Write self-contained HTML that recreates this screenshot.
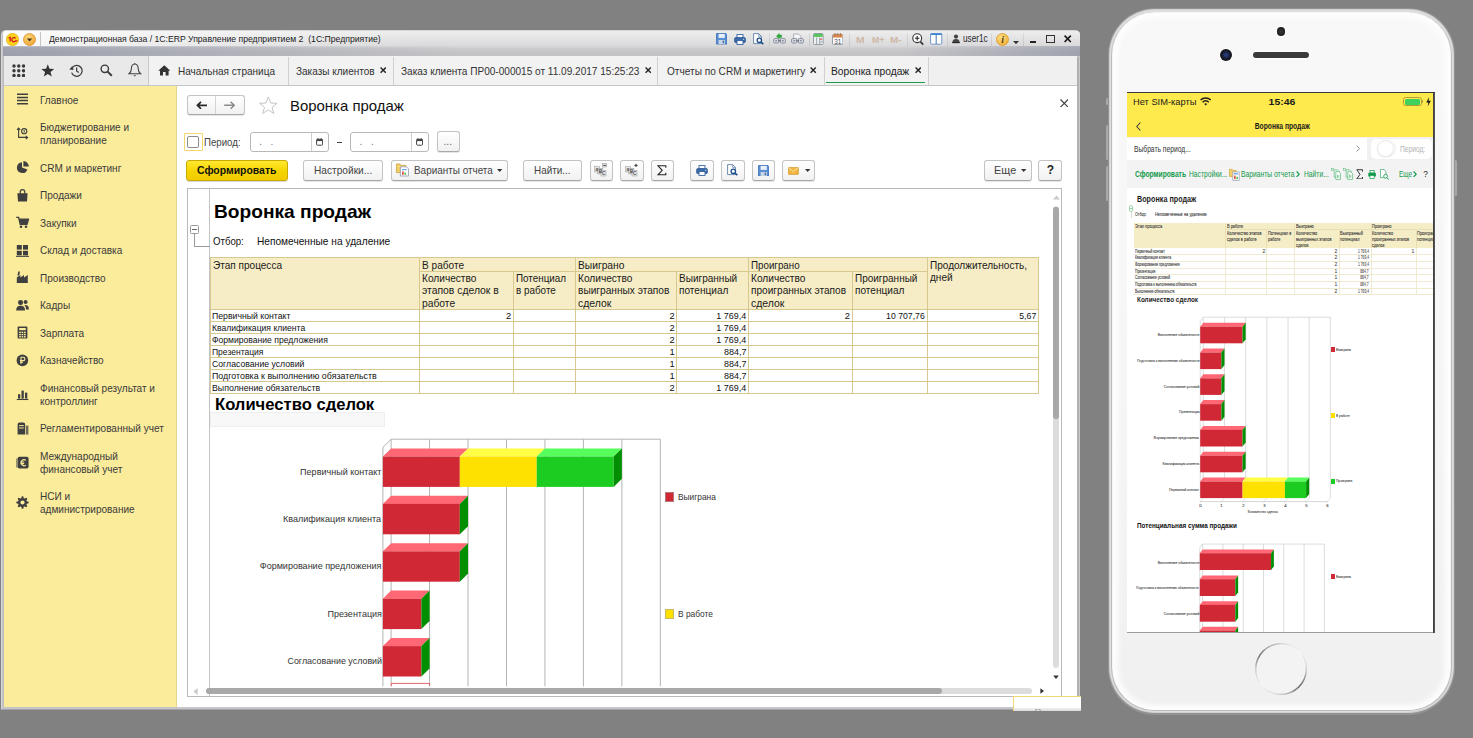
<!DOCTYPE html>
<html><head><meta charset="utf-8"><title>Воронка продаж</title>
<style>
html,body{margin:0;padding:0;}
body{width:1473px;height:738px;overflow:hidden;background:#818181;font-family:"Liberation Sans",sans-serif;position:relative;}
div,span,svg{position:absolute;box-sizing:border-box;}
span{white-space:pre;}
</style></head><body>
<div style="left:1.00px;top:29.50px;width:1079.20px;height:680.80px;background:linear-gradient(90deg,#c9c9cc 0,#b2b2b6 3px,#b0b0b3 100%);border-radius:5px 5px 1px 1px;border:1px solid #d6d6d8;border-right:1.3px solid #c9c9cb;border-bottom-color:#a2a2a7;"></div>
<div style="left:2.00px;top:30.50px;width:1078.00px;height:679.00px;border-top:1px solid #f4f4f6;border-radius:4px 4px 0 0;"></div>
<div style="left:2.00px;top:706.90px;width:1078.00px;height:2.20px;background:#c6c6ca;"></div>
<div style="left:2.50px;top:30.50px;width:1077.00px;height:26.00px;border-radius:4px 4px 0 0;background:linear-gradient(#ededee 0%,#e3e3e4 30%,#d9d9db 58%,#cbcbcd 68%,#c4c4c7 82%,#c3c3c6 100%);"></div>
<div style="left:2.50px;top:30.50px;width:420.00px;height:16.50px;border-radius:4px 0 0 0;background:linear-gradient(90deg,rgba(255,255,255,.9) 0,rgba(255,255,255,.55) 25%,rgba(255,255,255,0) 100%);"></div>
<div style="left:2.50px;top:46.00px;width:460.00px;height:10.30px;background:linear-gradient(90deg,rgba(125,130,150,.55) 0,rgba(125,130,150,.38) 30%,rgba(125,130,150,0) 100%);"></div>
<div style="left:899.50px;top:46.00px;width:180.00px;height:10.30px;background:linear-gradient(270deg,rgba(125,130,150,.5) 0,rgba(125,130,150,0) 100%);"></div>
<div style="left:4.00px;top:56.30px;width:1073.00px;height:29.30px;background:#f2f2f2;border-bottom:1px solid #c6c6c6;"></div>
<div style="left:4.00px;top:56.30px;width:144.50px;height:28.40px;background:#e9e9e9;border-right:1px solid #c9c9c9;"></div>
<div style="left:4.00px;top:85.60px;width:173.30px;height:621.40px;background:#fbec9c;border-right:1px solid #e3d58a;"></div>
<div style="left:177.30px;top:85.60px;width:899.70px;height:621.40px;background:#fff;"></div>
<svg style="left:5.50px;top:33.00px;" width="13" height="13" viewBox="0 0 13 13"><circle cx="6.5" cy="6.5" r="6.2" fill="#fbd11c" stroke="#e5a90f" stroke-width=".6"/><path d="M2.6 5.3 L4.2 4.3 V8.6 M9.6 5.4 A2.1 2.1 0 1 0 9.6 7.9 H11.4" fill="none" stroke="#d4141c" stroke-width="1.25"/></svg>
<svg style="left:23.00px;top:33.00px;" width="13" height="13" viewBox="0 0 13 13"><defs><radialGradient id="og" cx=".4" cy=".3" r=".8"><stop offset="0" stop-color="#fbd77a"/><stop offset="1" stop-color="#eea02a"/></radialGradient></defs><circle cx="6.5" cy="6.5" r="6" fill="url(#og)" stroke="#d48a1c" stroke-width=".7"/><path d="M3.8 5.6 H9.2 L6.5 8.6 Z" fill="#4a3a22"/></svg>
<div style="left:40.30px;top:32.00px;width:1.00px;height:15.00px;background:#c4c4c8;"></div>
<span style="left:48.80px;top:32.20px;font-size:9.60px;line-height:14px;color:#1b1b1b;transform:scaleX(0.9011);transform-origin:0 50%;">Демонстрационная база / 1C:ERP Управление предприятием 2  (1С:Предприятие)</span>
<svg style="left:715.80px;top:33.40px;" width="11.5" height="11.5" viewBox="0 0 11.5 11.5"><path d="M.5 .5 H10 L11 1.5 V11 H.5 Z" fill="#5b8fd3" stroke="#3a6bb0" stroke-width=".8"/><rect x="2.6" y=".9" width="6.2" height="4" fill="#e8f0fa"/><rect x="2.6" y="7" width="6.2" height="4" fill="#c9d6e6"/><rect x="6.6" y="7.7" width="1.4" height="2.6" fill="#4d6f98"/></svg>
<svg style="left:733.70px;top:33.80px;" width="12.0" height="11.0" viewBox="0 0 12 11"><rect x="3" y=".6" width="6" height="3.6" fill="#fff" stroke="#2f5f9c" stroke-width=".9"/><rect x=".6" y="3.6" width="10.8" height="5" rx="1.2" fill="#3a6cab" stroke="#234f88" stroke-width=".7"/><rect x="3" y="6.6" width="6" height="3.8" fill="#fff" stroke="#2f5f9c" stroke-width=".9"/><rect x="9" y="4.8" width="1.2" height="1" fill="#cfe0f5"/></svg>
<svg style="left:753.20px;top:33.20px;" width="11.0" height="12.0" viewBox="0 0 11 12"><path d="M.6 .6 H5.6 L8.4 3.4 V10.6 H.6 Z" fill="#fff" stroke="#5f7fa8" stroke-width=".9"/><path d="M5.6 .6 V3.4 H8.4" fill="none" stroke="#5f7fa8" stroke-width=".7"/><circle cx="6.3" cy="7.3" r="2.2" fill="#fff" stroke="#1d4f8a" stroke-width="1.3"/><path d="M7.9 8.9 L10.3 11.3" stroke="#1d4f8a" stroke-width="1.6"/></svg>
<div style="left:769.00px;top:32.50px;width:1.00px;height:13.50px;background:linear-gradient(#d9d9dc,#c4c5ca);"></div>
<svg style="left:773.00px;top:33.40px;" width="13" height="11.5" viewBox="0 0 13 11.5"><path d="M3.4 3.2 L6.2 .4 V2 H8.6 V4.4 H6.2 V6 Z" fill="#2fae3c" stroke="#1d8a2b" stroke-width=".4"/><rect x=".6" y="5.6" width="5.2" height="4.4" rx="1.2" fill="#dfe2e8" stroke="#7c8492" stroke-width=".9"/><rect x="7.2" y="5.6" width="5.2" height="4.4" rx="1.2" fill="#dfe2e8" stroke="#7c8492" stroke-width=".9"/><path d="M2.2 7.8 H4.2 M8.8 7.8 H10.8 M5 7.8 H8" stroke="#5b6370" stroke-width=".9"/></svg>
<svg style="left:791.20px;top:33.40px;" width="13" height="11.5" viewBox="0 0 13 11.5"><path d="M2.6 5 V1 H7.6 L10 3.4 V5" fill="#f4f4f6" stroke="#9aa0aa" stroke-width=".8"/><rect x=".6" y="5.6" width="5.2" height="4.4" rx="1.2" fill="#dfe2e8" stroke="#7c8492" stroke-width=".9"/><rect x="7.2" y="5.6" width="5.2" height="4.4" rx="1.2" fill="#dfe2e8" stroke="#7c8492" stroke-width=".9"/><path d="M2.2 7.8 H4.2 M8.8 7.8 H10.8 M5 7.8 H8" stroke="#5b6370" stroke-width=".9"/></svg>
<div style="left:809.00px;top:32.50px;width:1.00px;height:13.50px;background:linear-gradient(#d9d9dc,#c4c5ca);"></div>
<svg style="left:813.20px;top:33.20px;" width="10.6" height="12" viewBox="0 0 10.6 12"><rect x=".5" y=".5" width="9.6" height="11" rx="1" fill="#eef0f2" stroke="#8d949e" stroke-width=".9"/><rect x=".9" y=".9" width="8.8" height="3" fill="#57c45b"/><path d="M3.6 4.4 V11 M6.6 4.4 V11" stroke="#8d949e" stroke-width=".8"/><rect x="7.2" y="5.4" width="1.6" height="1.6" fill="#e45a5a"/><rect x="7.2" y="8" width="1.6" height="1.6" fill="#aab0b8"/></svg>
<svg style="left:832.00px;top:33.00px;" width="11.4" height="12.2" viewBox="0 0 11.4 12.2"><rect x=".5" y="1.4" width="10.4" height="10.2" rx="1" fill="#fff" stroke="#8d949e" stroke-width=".9"/><rect x=".9" y="1.6" width="9.6" height="3" fill="#d98a50"/><path d="M3 0 V3 M5.7 0 V3 M8.4 0 V3" stroke="#b46a34" stroke-width=".9"/><text x="5.7" y="10.6" font-size="6.4" font-family="Liberation Sans" text-anchor="middle" fill="#445">31</text></svg>
<div style="left:849.40px;top:32.50px;width:1.00px;height:13.50px;background:linear-gradient(#d9d9dc,#c4c5ca);"></div>
<span style="left:855.80px;top:32.60px;font-size:9.60px;line-height:14px;color:#cdb8a6;font-weight:bold;transform:scaleX(1.0750);transform-origin:0 50%;">M</span>
<span style="left:872.00px;top:32.60px;font-size:9.60px;line-height:14px;color:#cdb8a6;font-weight:bold;transform:scaleX(0.9111);transform-origin:0 50%;">M+</span>
<span style="left:890.00px;top:32.60px;font-size:9.60px;line-height:14px;color:#cdb8a6;font-weight:bold;transform:scaleX(1.0369);transform-origin:0 50%;">M-</span>
<div style="left:907.30px;top:32.50px;width:1.00px;height:13.50px;background:linear-gradient(#d9d9dc,#c4c5ca);"></div>
<svg style="left:912.20px;top:33.20px;" width="12" height="12.4" viewBox="0 0 12 12.4"><circle cx="5.2" cy="5.2" r="4.4" fill="#fff" stroke="#333" stroke-width="1.1"/><path d="M3 5.2 H7.4 M5.2 3 V7.4" stroke="#222" stroke-width="1.1"/><path d="M8.4 8.6 L11.2 11.6" stroke="#333" stroke-width="1.7"/></svg>
<svg style="left:930.40px;top:33.20px;" width="12.4" height="11.8" viewBox="0 0 12.4 11.8"><rect x=".6" y=".6" width="11.2" height="10.6" rx="1" fill="#fff" stroke="#6e93c4" stroke-width="1"/><rect x=".6" y=".4" width="11.2" height="1.6" fill="#3f83d6"/><path d="M6.2 2 V11" stroke="#5a7fb2" stroke-width="1.1"/></svg>
<div style="left:947.30px;top:32.50px;width:1.00px;height:13.50px;background:linear-gradient(#d9d9dc,#c4c5ca);"></div>
<svg style="left:952.20px;top:34.20px;" width="8" height="9.4" viewBox="0 0 8 9.4"><circle cx="4" cy="2.6" r="2.1" fill="#444" /><path d="M.3 9 C.3 6 2 5 4 5 C6 5 7.7 6 7.7 9 Z" fill="#444"/><path d="M0.3 8.7 H7.7" stroke="#222" stroke-width="1"/></svg>
<span style="left:963.00px;top:32.30px;font-size:10.00px;line-height:14px;color:#2a2a2a;transform:scaleX(0.8196);transform-origin:0 50%;">user1c</span>
<div style="left:991.00px;top:32.50px;width:1.00px;height:13.50px;background:linear-gradient(#d9d9dc,#c4c5ca);"></div>
<svg style="left:996.00px;top:33.00px;" width="13" height="13" viewBox="0 0 13 13"><defs><radialGradient id="ig" cx=".4" cy=".3" r=".8"><stop offset="0" stop-color="#fde08a"/><stop offset="1" stop-color="#f0ac2c"/></radialGradient></defs><circle cx="6.5" cy="6.5" r="6" fill="url(#ig)" stroke="#d99a22" stroke-width=".8"/><text x="6.6" y="10.2" font-size="10" font-family="Liberation Serif" font-style="italic" font-weight="bold" text-anchor="middle" fill="#5a4210">i</text></svg>
<svg style="left:1013.40px;top:40.60px;" width="6" height="3.4" viewBox="0 0 6 3.4"><path d="M0 0 H6 L3 3.2 Z" fill="#333"/></svg>
<div style="left:1022.70px;top:32.50px;width:1.00px;height:13.50px;background:linear-gradient(#d9d9dc,#c4c5ca);"></div>
<div style="left:1030.40px;top:41.00px;width:5.80px;height:1.60px;background:#222;"></div>
<div style="left:1046.20px;top:35.00px;width:9.00px;height:7.80px;border:1px solid #333;border-top-width:1.8px;"></div>
<svg style="left:1064.40px;top:35.00px;" width="7.4" height="7.6" viewBox="0 0 7.4 7.6"><path d="M.6 .6 L6.8 7 M6.8 .6 L.6 7" stroke="#1a1a1a" stroke-width="1.7"/></svg>
<svg style="left:11.90px;top:63.80px;" width="13.5" height="13.5" viewBox="0 0 13.5 13.5"><circle cx="2.0" cy="2.0" r="1.72" fill="#3a3a3a"/><circle cx="2.0" cy="6.75" r="1.72" fill="#3a3a3a"/><circle cx="2.0" cy="11.5" r="1.72" fill="#3a3a3a"/><circle cx="6.75" cy="2.0" r="1.72" fill="#3a3a3a"/><circle cx="6.75" cy="6.75" r="1.72" fill="#3a3a3a"/><circle cx="6.75" cy="11.5" r="1.72" fill="#3a3a3a"/><circle cx="11.5" cy="2.0" r="1.72" fill="#3a3a3a"/><circle cx="11.5" cy="6.75" r="1.72" fill="#3a3a3a"/><circle cx="11.5" cy="11.5" r="1.72" fill="#3a3a3a"/></svg>
<svg style="left:40.80px;top:64.00px;" width="13.6" height="13" viewBox="0 0 13.6 13"><path d="M6.8 .2 L8.5 4.7 L13.3 4.9 L9.5 7.9 L10.8 12.6 L6.8 9.9 L2.8 12.6 L4.1 7.9 L.3 4.9 L5.1 4.7 Z" fill="#333"/></svg>
<svg style="left:69.40px;top:63.60px;" width="14" height="13.6" viewBox="0 0 14 13.6"><path d="M3.4 3.6 A5.4 5.4 0 1 1 2.6 8.6" fill="none" stroke="#3a3a3a" stroke-width="1.2"/><path d="M.3 5.6 L4.6 6 L3.4 2 Z" fill="#3a3a3a"/><path d="M7.6 3.6 V7 L9.8 8.6" fill="none" stroke="#3a3a3a" stroke-width="1.2"/></svg>
<svg style="left:99.60px;top:63.80px;" width="13" height="13" viewBox="0 0 13 13"><circle cx="4.8" cy="4.8" r="3.7" fill="none" stroke="#3a3a3a" stroke-width="1.4"/><path d="M7.6 7.6 L11.8 11.8" stroke="#3a3a3a" stroke-width="2"/></svg>
<svg style="left:128.00px;top:63.20px;" width="13.6" height="14.2" viewBox="0 0 13.6 14.2"><path d="M6.8 1 C4.2 1 3.4 3.4 3.4 5.6 C3.4 8.4 2.4 9.8 1 10.8 H12.6 C11.2 9.8 10.2 8.4 10.2 5.6 C10.2 3.4 9.4 1 6.8 1 Z" fill="none" stroke="#444" stroke-width="1.1"/><path d="M5.2 12.2 H8.4 L6.8 13.6 Z" fill="#444"/><path d="M6.8 0 V1.2" stroke="#444" stroke-width="1"/></svg>
<div style="left:287.50px;top:57.00px;width:1.00px;height:28.00px;background:#d0d0d0;"></div>
<div style="left:393.00px;top:57.00px;width:1.00px;height:28.00px;background:#d0d0d0;"></div>
<div style="left:656.50px;top:57.00px;width:1.00px;height:28.00px;background:#d0d0d0;"></div>
<div style="left:823.80px;top:57.00px;width:1.00px;height:28.00px;background:#d0d0d0;"></div>
<div style="left:927.60px;top:57.00px;width:1.00px;height:28.00px;background:#d0d0d0;"></div>
<div style="left:928.60px;top:56.30px;width:148.40px;height:28.30px;background:#f0f0f0;"></div>
<svg style="left:157.60px;top:65.40px;" width="12.6" height="10.6" viewBox="0 0 12.6 10.6"><path d="M6.3 .3 L12.4 5.8 H10.6 V10.4 H7.6 V7 H5 V10.4 H2 V5.8 H.2 Z" fill="#333"/></svg>
<span style="left:177.60px;top:63.50px;font-size:11.00px;line-height:15px;color:#333;transform:scaleX(0.9113);transform-origin:0 50%;">Начальная страница</span>
<span style="left:296.00px;top:63.50px;font-size:11.00px;line-height:15px;color:#333;transform:scaleX(0.9098);transform-origin:0 50%;">Заказы клиентов</span>
<span style="left:401.40px;top:63.50px;font-size:11.00px;line-height:15px;color:#333;transform:scaleX(0.9145);transform-origin:0 50%;">Заказ клиента ПР00-000015 от 11.09.2017 15:25:23</span>
<span style="left:666.60px;top:63.50px;font-size:11.00px;line-height:15px;color:#333;transform:scaleX(0.9179);transform-origin:0 50%;">Отчеты по CRM и маркетингу</span>
<span style="left:831.20px;top:63.50px;font-size:11.00px;line-height:15px;color:#222;transform:scaleX(0.9327);transform-origin:0 50%;">Воронка продаж</span>
<svg style="left:380.00px;top:67.40px;" width="6.4" height="6.4" viewBox="0 0 6.4 6.4"><path d="M.6 .6 L5.8 5.8 M5.8 .6 L.6 5.8" stroke="#222" stroke-width="1.4"/></svg>
<svg style="left:645.20px;top:67.40px;" width="6.4" height="6.4" viewBox="0 0 6.4 6.4"><path d="M.6 .6 L5.8 5.8 M5.8 .6 L.6 5.8" stroke="#222" stroke-width="1.4"/></svg>
<svg style="left:810.20px;top:67.40px;" width="6.4" height="6.4" viewBox="0 0 6.4 6.4"><path d="M.6 .6 L5.8 5.8 M5.8 .6 L.6 5.8" stroke="#222" stroke-width="1.4"/></svg>
<svg style="left:915.00px;top:67.40px;" width="6.4" height="6.4" viewBox="0 0 6.4 6.4"><path d="M.6 .6 L5.8 5.8 M5.8 .6 L.6 5.8" stroke="#222" stroke-width="1.4"/></svg>
<div style="left:826.40px;top:81.80px;width:98.30px;height:1.50px;background:#1e9b47;"></div>
<svg style="left:15.60px;top:93.40px;" width="13" height="13.2" viewBox="0 0 13 13.2"><path d="M1 1.2 H12 M1 4.4 H12 M1 7.6 H12 M1 10.8 H12" stroke="#3f3f3f" stroke-width="1.5"/></svg>
<span style="left:40.00px;top:92.50px;font-size:10.80px;line-height:15px;color:#3a3a3a;transform:scaleX(0.9300);transform-origin:0 50%;">Главное</span>
<svg style="left:15.60px;top:127.40px;" width="13" height="13.2" viewBox="0 0 13 13.2"><path d="M2.6 1 V10.4 H11.6 M1 2.8 L2.6 1 L4.2 2.8 M9.8 8.8 L11.6 10.4 L9.8 12" fill="none" stroke="#3f3f3f" stroke-width="1.1"/><circle cx="8.2" cy="4.2" r="2.6" fill="none" stroke="#3f3f3f" stroke-width="1.1"/><path d="M8.2 3 V5.6" stroke="#3f3f3f" stroke-width="1"/></svg>
<span style="left:40.00px;top:120.00px;font-size:10.80px;line-height:15px;color:#3a3a3a;transform:scaleX(0.9300);transform-origin:0 50%;">Бюджетирование и</span>
<span style="left:40.00px;top:133.00px;font-size:10.80px;line-height:15px;color:#3a3a3a;transform:scaleX(0.9300);transform-origin:0 50%;">планирование</span>
<svg style="left:15.60px;top:161.40px;" width="13" height="13.2" viewBox="0 0 13 13.2"><path d="M6 1.2 A5.4 5.4 0 1 0 11.4 8.4 L6 6.6 Z" fill="#3f3f3f"/><path d="M7.4 0 A5.6 5.6 0 0 1 12.8 5.6 H7.4 Z" fill="#3f3f3f"/></svg>
<span style="left:40.00px;top:160.50px;font-size:10.80px;line-height:15px;color:#3a3a3a;transform:scaleX(0.9300);transform-origin:0 50%;">CRM и маркетинг</span>
<svg style="left:15.60px;top:188.90px;" width="13" height="13.2" viewBox="0 0 13 13.2"><path d="M1.4 4.2 H11.6 L11 12.6 H2 Z" fill="#3f3f3f"/><path d="M4.2 5.6 V3 A2.3 2.3 0 0 1 8.8 3 V5.6" fill="none" stroke="#3f3f3f" stroke-width="1.2"/></svg>
<span style="left:40.00px;top:188.00px;font-size:10.80px;line-height:15px;color:#3a3a3a;transform:scaleX(0.9300);transform-origin:0 50%;">Продажи</span>
<svg style="left:15.60px;top:216.40px;" width="13" height="13.2" viewBox="0 0 13 13.2"><path d="M.2 1.4 H2.6 L4.2 8.4 H11 L12.6 3.2 H3.2" fill="none" stroke="#3f3f3f" stroke-width="1.3"/><path d="M3.4 3.2 H12.4 L11 8 H4.4 Z" fill="#3f3f3f"/><circle cx="5" cy="10.8" r="1.3" fill="#3f3f3f"/><circle cx="10" cy="10.8" r="1.3" fill="#3f3f3f"/></svg>
<span style="left:40.00px;top:215.50px;font-size:10.80px;line-height:15px;color:#3a3a3a;transform:scaleX(0.9300);transform-origin:0 50%;">Закупки</span>
<svg style="left:15.60px;top:243.90px;" width="13" height="13.2" viewBox="0 0 13 13.2"><rect x=".8" y="1" width="5" height="4.6" fill="#3f3f3f"/><rect x="7" y="1" width="5" height="4.6" fill="#3f3f3f"/><rect x=".8" y="6.8" width="5" height="4.6" fill="#3f3f3f"/><rect x="7" y="6.8" width="5" height="4.6" fill="#3f3f3f"/><path d="M0 12.4 H13" stroke="#3f3f3f" stroke-width="1"/></svg>
<span style="left:40.00px;top:243.00px;font-size:10.80px;line-height:15px;color:#3a3a3a;transform:scaleX(0.9300);transform-origin:0 50%;">Склад и доставка</span>
<svg style="left:15.60px;top:271.40px;" width="13" height="13.2" viewBox="0 0 13 13.2"><path d="M.8 12 V6.4 L4.4 4 V6.4 L8 4 V6.4 L11.8 4 V12 Z" fill="#3f3f3f"/><path d="M1.4 4.4 L2.4 .6 H4 L3.2 4.4 Z" fill="#3f3f3f"/></svg>
<span style="left:40.00px;top:270.50px;font-size:10.80px;line-height:15px;color:#3a3a3a;transform:scaleX(0.9300);transform-origin:0 50%;">Производство</span>
<svg style="left:15.60px;top:298.90px;" width="13" height="13.2" viewBox="0 0 13 13.2"><circle cx="4.6" cy="3.6" r="2.5" fill="#3f3f3f"/><path d="M.2 11.6 C.2 8 2 6.8 4.6 6.8 C7.2 6.8 9 8 9 11.6 Z" fill="#3f3f3f"/><circle cx="9.6" cy="3" r="2" fill="#3f3f3f"/><path d="M9 6 C11.6 5.8 13 7.4 13 10.4 H10 C10 8.4 9.6 7 8.4 6.2 Z" fill="#3f3f3f"/></svg>
<span style="left:40.00px;top:298.00px;font-size:10.80px;line-height:15px;color:#3a3a3a;transform:scaleX(0.9300);transform-origin:0 50%;">Кадры</span>
<svg style="left:15.60px;top:326.40px;" width="13" height="13.2" viewBox="0 0 13 13.2"><rect x="1.6" y=".4" width="9.8" height="12.2" rx="1.2" fill="#3f3f3f"/><rect x="3.2" y="2" width="6.6" height="2.2" fill="#fbec9c"/><rect x="3.10" y="5.70" width="1.7" height="1.4" fill="#fbec9c"/><rect x="3.10" y="7.90" width="1.7" height="1.4" fill="#fbec9c"/><rect x="3.10" y="10.10" width="1.7" height="1.4" fill="#fbec9c"/><rect x="5.55" y="5.70" width="1.7" height="1.4" fill="#fbec9c"/><rect x="5.55" y="7.90" width="1.7" height="1.4" fill="#fbec9c"/><rect x="5.55" y="10.10" width="1.7" height="1.4" fill="#fbec9c"/><rect x="8.00" y="5.70" width="1.7" height="1.4" fill="#fbec9c"/><rect x="8.00" y="7.90" width="1.7" height="1.4" fill="#fbec9c"/><rect x="8.00" y="10.10" width="1.7" height="1.4" fill="#fbec9c"/></svg>
<span style="left:40.00px;top:325.50px;font-size:10.80px;line-height:15px;color:#3a3a3a;transform:scaleX(0.9300);transform-origin:0 50%;">Зарплата</span>
<svg style="left:15.60px;top:353.90px;" width="13" height="13.2" viewBox="0 0 13 13.2"><circle cx="6.4" cy="6.4" r="5.8" fill="#3f3f3f"/><path d="M5 9.8 V3.2 H7.2 A1.7 1.7 0 0 1 7.2 6.6 H4 M4 8.2 H7" fill="none" stroke="#fbec9c" stroke-width="1.1"/></svg>
<span style="left:40.00px;top:353.00px;font-size:10.80px;line-height:15px;color:#3a3a3a;transform:scaleX(0.9300);transform-origin:0 50%;">Казначейство</span>
<svg style="left:15.60px;top:387.90px;" width="13" height="13.2" viewBox="0 0 13 13.2"><rect x="2" y="6.2" width="2.3" height="4.4" fill="#3f3f3f"/><rect x="5.5" y="2.6" width="2.3" height="8" fill="#3f3f3f"/><rect x="9" y="4.6" width="2.3" height="6" fill="#3f3f3f"/><path d="M.8 11.5 H12.4" stroke="#3f3f3f" stroke-width="1.1"/></svg>
<span style="left:40.00px;top:380.50px;font-size:10.80px;line-height:15px;color:#3a3a3a;transform:scaleX(0.9300);transform-origin:0 50%;">Финансовый результат и</span>
<span style="left:40.00px;top:393.50px;font-size:10.80px;line-height:15px;color:#3a3a3a;transform:scaleX(0.9300);transform-origin:0 50%;">контроллинг</span>
<svg style="left:15.60px;top:421.90px;" width="13" height="13.2" viewBox="0 0 13 13.2"><path d="M1.6 12.6 V2.4 A1.8 1.8 0 0 1 3.4 .6 H7.4 A1.8 1.8 0 0 1 9.2 2.4 V12.6 Z" fill="#3f3f3f"/><path d="M3 3.6 H7.8 M3 6 H7.8" stroke="#fbec9c" stroke-width="1"/><rect x="10" y="3.6" width="2.4" height="9" fill="#6d6a5a"/></svg>
<span style="left:40.00px;top:421.00px;font-size:10.80px;line-height:15px;color:#3a3a3a;transform:scaleX(0.9300);transform-origin:0 50%;">Регламентированный учет</span>
<svg style="left:15.60px;top:455.90px;" width="13" height="13.2" viewBox="0 0 13 13.2"><rect x="1.6" y=".8" width="11" height="11.8" rx="1.8" fill="#3f3f3f"/><path d="M.8 2.6 V11.6" stroke="#6d6a5a" stroke-width="1"/><path d="M9.8 4.2 A3 3 0 1 0 9.8 9.2 M4.4 6 H8.2 M4.4 7.6 H8.2" fill="none" stroke="#fbec9c" stroke-width="1.1"/></svg>
<span style="left:40.00px;top:448.50px;font-size:10.80px;line-height:15px;color:#3a3a3a;transform:scaleX(0.9300);transform-origin:0 50%;">Международный</span>
<span style="left:40.00px;top:461.50px;font-size:10.80px;line-height:15px;color:#3a3a3a;transform:scaleX(0.9300);transform-origin:0 50%;">финансовый учет</span>
<svg style="left:15.60px;top:495.90px;" width="13" height="13.2" viewBox="0 0 13 13.2"><path d="M12.66 5.77 L12.66 7.23 L10.83 7.72 L10.43 8.70 L11.37 10.34 L10.34 11.37 L8.70 10.43 L7.72 10.83 L7.23 12.66 L5.77 12.66 L5.28 10.83 L4.30 10.43 L2.66 11.37 L1.63 10.34 L2.57 8.70 L2.17 7.72 L0.34 7.23 L0.34 5.77 L2.17 5.28 L2.57 4.30 L1.63 2.66 L2.66 1.63 L4.30 2.57 L5.28 2.17 L5.77 0.34 L7.23 0.34 L7.72 2.17 L8.70 2.57 L10.34 1.63 L11.37 2.66 L10.43 4.30 L10.83 5.28 Z" fill="#3f3f3f"/><circle cx="6.5" cy="6.5" r="2.1" fill="#fbec9c"/></svg>
<span style="left:40.00px;top:488.50px;font-size:10.80px;line-height:15px;color:#3a3a3a;transform:scaleX(0.9300);transform-origin:0 50%;">НСИ и</span>
<span style="left:40.00px;top:501.50px;font-size:10.80px;line-height:15px;color:#3a3a3a;transform:scaleX(0.9300);transform-origin:0 50%;">администрирование</span>
<div style="left:186.80px;top:95.40px;width:57.80px;height:19.20px;border:1px solid #c3c3c3;border-bottom-color:#a9a9a9;border-radius:3px;background:linear-gradient(#ffffff,#f1f1f1);box-shadow:0 1px 0 rgba(0,0,0,.10);"></div>
<div style="left:215.20px;top:96.40px;width:1.00px;height:17.20px;background:#d4d4d4;"></div>
<svg style="left:195.60px;top:100.60px;" width="11.6" height="8.6" viewBox="0 0 11.6 8.6"><path d="M11.4 4.3 H2.4 M5 .8 L1.4 4.3 L5 7.8" fill="none" stroke="#2a2a2a" stroke-width="1.7"/></svg>
<svg style="left:224.00px;top:100.60px;" width="11.6" height="8.6" viewBox="0 0 11.6 8.6"><path d="M.2 4.3 H9.2 M6.6 .8 L10.2 4.3 L6.6 7.8" fill="none" stroke="#8a8a8a" stroke-width="1.5"/></svg>
<svg style="left:258.60px;top:95.80px;" width="18.6" height="18" viewBox="0 0 18.6 18"><path d="M9.3 1 L11.7 7 L18 7.3 L13.1 11.3 L14.8 17.4 L9.3 13.9 L3.8 17.4 L5.5 11.3 L.6 7.3 L6.9 7 Z" fill="#fff" stroke="#c4c4c4" stroke-width="1"/></svg>
<span style="left:290.00px;top:95.60px;font-size:15.00px;line-height:20px;color:#111;transform:scaleX(0.9954);transform-origin:0 50%;">Воронка продаж</span>
<svg style="left:1059.60px;top:98.80px;" width="8.6" height="8.6" viewBox="0 0 8.6 8.6"><path d="M.5 .5 L8.1 8.1 M8.1 .5 L.5 8.1" stroke="#444" stroke-width="1.2"/></svg>
<div style="left:183.80px;top:133.00px;width:18.80px;height:18.20px;border:1px solid #f4d66a;border-radius:1px;"></div>
<div style="left:187.20px;top:136.00px;width:12.20px;height:12.20px;border:1px solid #8c8c8c;border-radius:2px;background:#fff;"></div>
<span style="left:204.40px;top:134.70px;font-size:10.60px;line-height:15px;color:#444;transform:scaleX(0.9125);transform-origin:0 50%;">Период:</span>
<div style="left:249.80px;top:132.00px;width:79.10px;height:19.60px;border:1px solid #b8b8b8;border-radius:3px;background:#fff;"></div>
<div style="left:311.00px;top:133.00px;width:1.00px;height:17.60px;background:#cfcfcf;"></div>
<span style="left:259.20px;top:135.40px;font-size:10.00px;line-height:14px;color:#777;">.</span>
<span style="left:270.60px;top:135.40px;font-size:10.00px;line-height:14px;color:#777;">.</span>
<svg style="left:315.60px;top:137.80px;" width="7.2" height="7.8" viewBox="0 0 7.2 7.8"><rect x=".6" y="1.3" width="6" height="5.9" rx="1" fill="#fff" stroke="#444" stroke-width="1"/><rect x=".6" y="1.1" width="6" height="2" fill="#444"/><path d="M2 0 V1.8 M5.2 0 V1.8" stroke="#444" stroke-width=".9"/></svg>
<div style="left:350.20px;top:132.00px;width:78.40px;height:19.60px;border:1px solid #b8b8b8;border-radius:3px;background:#fff;"></div>
<div style="left:411.40px;top:133.00px;width:1.00px;height:17.60px;background:#cfcfcf;"></div>
<span style="left:359.60px;top:135.40px;font-size:10.00px;line-height:14px;color:#777;">.</span>
<span style="left:371.00px;top:135.40px;font-size:10.00px;line-height:14px;color:#777;">.</span>
<svg style="left:416.00px;top:137.80px;" width="7.2" height="7.8" viewBox="0 0 7.2 7.8"><rect x=".6" y="1.3" width="6" height="5.9" rx="1" fill="#fff" stroke="#444" stroke-width="1"/><rect x=".6" y="1.1" width="6" height="2" fill="#444"/><path d="M2 0 V1.8 M5.2 0 V1.8" stroke="#444" stroke-width=".9"/></svg>
<div style="left:336.60px;top:142.00px;width:5.60px;height:1.10px;background:#444;"></div>
<div style="left:437.00px;top:131.40px;width:23.20px;height:20.60px;border:1px solid #c3c3c3;border-bottom-color:#a9a9a9;border-radius:3px;background:linear-gradient(#ffffff,#f1f1f1);box-shadow:0 1px 0 rgba(0,0,0,.10);"></div>
<span style="left:443.60px;top:134.60px;font-size:10.00px;line-height:14px;color:#666;">...</span>
<div style="left:186.40px;top:160.20px;width:101.20px;height:20.40px;border:1px solid #c9a800;border-radius:3px;background:linear-gradient(#ffe830,#f5d400 55%,#f2cb00);box-shadow:0 1px 0 rgba(0,0,0,.15);"></div>
<span style="left:197.20px;top:162.90px;font-size:11.00px;line-height:15px;color:#111;font-weight:bold;transform:scaleX(0.9475);transform-origin:0 50%;">Сформировать</span>
<div style="left:303.00px;top:160.20px;width:79.60px;height:20.40px;border:1px solid #c3c3c3;border-bottom-color:#a9a9a9;border-radius:3px;background:linear-gradient(#ffffff,#f1f1f1);box-shadow:0 1px 0 rgba(0,0,0,.10);"></div>
<span style="left:313.60px;top:162.90px;font-size:11.00px;line-height:15px;color:#444;transform:scaleX(0.9222);transform-origin:0 50%;">Настройки...</span>
<div style="left:390.50px;top:160.20px;width:117.10px;height:20.40px;border:1px solid #c3c3c3;border-bottom-color:#a9a9a9;border-radius:3px;background:linear-gradient(#ffffff,#f1f1f1);box-shadow:0 1px 0 rgba(0,0,0,.10);"></div>
<span style="left:413.80px;top:162.90px;font-size:11.00px;line-height:15px;color:#444;transform:scaleX(0.9022);transform-origin:0 50%;">Варианты отчета</span>
<svg style="left:497.20px;top:169.20px;" width="5.4" height="3.2" viewBox="0 0 5.4 3.2"><path d="M0 0 H5.4 L2.7 3 Z" fill="#333"/></svg>
<svg style="left:395.80px;top:163.20px;" width="13.4" height="13.6" viewBox="0 0 13.4 13.6"><path d="M.5 1 H4 L5 2.4 H9.8 V9.6 H.5 Z" fill="#f2cf63" stroke="#c9a03c" stroke-width=".8"/><path d="M.9 3.4 H9.4" stroke="#f9e39a" stroke-width=".8"/><path d="M4.4 3.8 H10.4 L12.6 6 V13 H4.4 Z" fill="#fff" stroke="#8e98aa" stroke-width=".8"/><rect x="6" y="8.4" width="1.8" height="3.4" fill="#e05a4e"/><rect x="8.4" y="9.6" width="1.8" height="2.2" fill="#5bbf5a"/><rect x="6" y="6" width="4.6" height="1.2" fill="#6aa7e4"/></svg>
<div style="left:523.40px;top:160.20px;width:58.40px;height:20.40px;border:1px solid #c3c3c3;border-bottom-color:#a9a9a9;border-radius:3px;background:linear-gradient(#ffffff,#f1f1f1);box-shadow:0 1px 0 rgba(0,0,0,.10);"></div>
<span style="left:534.20px;top:162.90px;font-size:11.00px;line-height:15px;color:#444;transform:scaleX(0.9023);transform-origin:0 50%;">Найти...</span>
<div style="left:589.50px;top:160.20px;width:23.50px;height:20.40px;border:1px solid #c3c3c3;border-bottom-color:#a9a9a9;border-radius:3px;background:linear-gradient(#ffffff,#f1f1f1);box-shadow:0 1px 0 rgba(0,0,0,.10);"></div>
<div style="left:620.30px;top:160.20px;width:23.50px;height:20.40px;border:1px solid #c3c3c3;border-bottom-color:#a9a9a9;border-radius:3px;background:linear-gradient(#ffffff,#f1f1f1);box-shadow:0 1px 0 rgba(0,0,0,.10);"></div>
<div style="left:650.80px;top:160.20px;width:23.50px;height:20.40px;border:1px solid #c3c3c3;border-bottom-color:#a9a9a9;border-radius:3px;background:linear-gradient(#ffffff,#f1f1f1);box-shadow:0 1px 0 rgba(0,0,0,.10);"></div>
<svg style="left:594.40px;top:163.40px;" width="13.6" height="14" viewBox="0 0 13.6 14"><rect x=".6" y="3.6" width="5" height="5.4" fill="#e6e6e6" stroke="#a8a8a8" stroke-width=".6"/><rect x="3.8" y="5.6" width="5" height="5.4" fill="#dcdcdc" stroke="#9c9c9c" stroke-width=".6"/><rect x="7" y="7.6" width="5" height="5.4" fill="#e6e6e6" stroke="#a8a8a8" stroke-width=".6"/><text x="1.6" y="8" font-size="4.6" font-family="Liberation Sans" font-weight="bold" fill="#555">a</text><text x="4.8" y="10" font-size="4.6" font-family="Liberation Sans" font-weight="bold" fill="#444">B</text><text x="8" y="12.2" font-size="4.6" font-family="Liberation Sans" font-weight="bold" fill="#555">C</text><rect x="8.6" y=".6" width="4" height="3.4" fill="#e8e8e8" stroke="#999" stroke-width=".6"/><path d="M9.4 2.4 H11.8" stroke="#333" stroke-width="1"/></svg>
<svg style="left:625.40px;top:163.40px;" width="13.6" height="14" viewBox="0 0 13.6 14"><rect x=".6" y="3.6" width="5" height="5.4" fill="#e6e6e6" stroke="#a8a8a8" stroke-width=".6"/><rect x="3.8" y="5.6" width="5" height="5.4" fill="#dcdcdc" stroke="#9c9c9c" stroke-width=".6"/><rect x="7" y="7.6" width="5" height="5.4" fill="#e6e6e6" stroke="#a8a8a8" stroke-width=".6"/><text x="1.6" y="8" font-size="4.6" font-family="Liberation Sans" font-weight="bold" fill="#555">a</text><text x="4.8" y="10" font-size="4.6" font-family="Liberation Sans" font-weight="bold" fill="#444">B</text><text x="8" y="12.2" font-size="4.6" font-family="Liberation Sans" font-weight="bold" fill="#555">C</text><path d="M9.4 2.4 H12.6 M11 .8 V4" stroke="#333" stroke-width="1"/></svg>
<svg style="left:657.20px;top:165.40px;" width="9.8" height="10.6" viewBox="0 0 9.8 10.6"><path d="M8.8 2.8 V.8 H1 L5.2 5.3 L1 9.8 H8.8 V7.8" fill="none" stroke="#222" stroke-width="1.1"/></svg>
<div style="left:690.30px;top:160.20px;width:23.50px;height:20.40px;border:1px solid #c3c3c3;border-bottom-color:#a9a9a9;border-radius:3px;background:linear-gradient(#ffffff,#f1f1f1);box-shadow:0 1px 0 rgba(0,0,0,.10);"></div>
<div style="left:721.00px;top:160.20px;width:23.50px;height:20.40px;border:1px solid #c3c3c3;border-bottom-color:#a9a9a9;border-radius:3px;background:linear-gradient(#ffffff,#f1f1f1);box-shadow:0 1px 0 rgba(0,0,0,.10);"></div>
<div style="left:751.50px;top:160.20px;width:23.50px;height:20.40px;border:1px solid #c3c3c3;border-bottom-color:#a9a9a9;border-radius:3px;background:linear-gradient(#ffffff,#f1f1f1);box-shadow:0 1px 0 rgba(0,0,0,.10);"></div>
<div style="left:782.30px;top:160.20px;width:32.70px;height:20.40px;border:1px solid #c3c3c3;border-bottom-color:#a9a9a9;border-radius:3px;background:linear-gradient(#ffffff,#f1f1f1);box-shadow:0 1px 0 rgba(0,0,0,.10);"></div>
<svg style="left:696.00px;top:165.00px;" width="12.0" height="11.0" viewBox="0 0 12 11"><rect x="3" y=".6" width="6" height="3.6" fill="#fff" stroke="#2f5f9c" stroke-width=".9"/><rect x=".6" y="3.6" width="10.8" height="5" rx="1.2" fill="#3a6cab" stroke="#234f88" stroke-width=".7"/><rect x="3" y="6.6" width="6" height="3.8" fill="#fff" stroke="#2f5f9c" stroke-width=".9"/><rect x="9" y="4.8" width="1.2" height="1" fill="#cfe0f5"/></svg>
<svg style="left:727.40px;top:164.40px;" width="11.0" height="12.0" viewBox="0 0 11 12"><path d="M.6 .6 H5.6 L8.4 3.4 V10.6 H.6 Z" fill="#fff" stroke="#5f7fa8" stroke-width=".9"/><path d="M5.6 .6 V3.4 H8.4" fill="none" stroke="#5f7fa8" stroke-width=".7"/><circle cx="6.3" cy="7.3" r="2.2" fill="#fff" stroke="#1d4f8a" stroke-width="1.3"/><path d="M7.9 8.9 L10.3 11.3" stroke="#1d4f8a" stroke-width="1.6"/></svg>
<svg style="left:757.60px;top:164.60px;" width="11.5" height="11.5" viewBox="0 0 11.5 11.5"><path d="M.5 .5 H10 L11 1.5 V11 H.5 Z" fill="#5b8fd3" stroke="#3a6bb0" stroke-width=".8"/><rect x="2.6" y=".9" width="6.2" height="4" fill="#e8f0fa"/><rect x="2.6" y="7" width="6.2" height="4" fill="#c9d6e6"/><rect x="6.6" y="7.7" width="1.4" height="2.6" fill="#4d6f98"/></svg>
<svg style="left:788.20px;top:166.80px;" width="10.8" height="7.8" viewBox="0 0 10.8 7.8"><rect x=".4" y=".4" width="10" height="7" rx=".6" fill="#f3b743" stroke="#d39a2a" stroke-width=".7"/><path d="M.7 .8 L5.4 4.6 L10.1 .8" fill="none" stroke="#fbe6b0" stroke-width=".9"/><path d="M.7 7.1 L3.9 3.8 M10.1 7.1 L6.9 3.8" stroke="#e2a63a" stroke-width=".6"/></svg>
<svg style="left:805.20px;top:169.20px;" width="5.4" height="3.2" viewBox="0 0 5.4 3.2"><path d="M0 0 H5.4 L2.7 3 Z" fill="#333"/></svg>
<div style="left:983.60px;top:160.20px;width:48.00px;height:20.40px;border:1px solid #c3c3c3;border-bottom-color:#a9a9a9;border-radius:3px;background:linear-gradient(#ffffff,#f1f1f1);box-shadow:0 1px 0 rgba(0,0,0,.10);"></div>
<span style="left:994.20px;top:162.90px;font-size:11.00px;line-height:15px;color:#444;transform:scaleX(0.9915);transform-origin:0 50%;">Еще</span>
<svg style="left:1021.40px;top:169.20px;" width="5.4" height="3.2" viewBox="0 0 5.4 3.2"><path d="M0 0 H5.4 L2.7 3 Z" fill="#333"/></svg>
<div style="left:1038.40px;top:160.20px;width:23.60px;height:20.40px;border:1px solid #c3c3c3;border-bottom-color:#a9a9a9;border-radius:3px;background:linear-gradient(#ffffff,#f1f1f1);box-shadow:0 1px 0 rgba(0,0,0,.10);"></div>
<span style="left:1046.73px;top:162.40px;font-size:12.00px;line-height:16px;color:#222;font-weight:bold;">?</span>
<div style="left:186.80px;top:188.00px;width:875.40px;height:509.00px;border:1px solid #b9b9b9;background:#fff;"></div>
<div style="left:209.20px;top:189.00px;width:1.00px;height:507.00px;background:#c4c4c4;"></div>
<div style="left:189.60px;top:225.00px;width:9.00px;height:9.00px;border:1px solid #9a9a9a;border-radius:1.5px;background:#fff;"></div>
<div style="left:191.60px;top:229.00px;width:5.00px;height:1.00px;background:#666;"></div>
<div style="left:193.60px;top:234.00px;width:1.00px;height:13.00px;background:#9a9a9a;"></div>
<div style="left:193.60px;top:246.40px;width:16.00px;height:1.00px;background:#9a9a9a;"></div>
<span style="left:214.00px;top:199.10px;font-size:19.00px;line-height:25px;color:#000;font-weight:bold;transform:scaleX(1.0083);transform-origin:0 50%;">Воронка продаж</span>
<span style="left:212.80px;top:234.60px;font-size:10.40px;line-height:14px;color:#111;transform:scaleX(0.9263);transform-origin:0 50%;">Отбор:</span>
<span style="left:257.20px;top:234.60px;font-size:10.40px;line-height:14px;color:#111;transform:scaleX(0.9771);transform-origin:0 50%;">Непомеченные на удаление</span>
<div style="left:209.60px;top:257.20px;width:829.20px;height:52.20px;background:#f6edc6;"></div>
<div style="left:209.60px;top:309.40px;width:829.20px;height:83.10px;background:#fff;"></div>
<div style="left:209.60px;top:257.20px;width:829.20px;height:1.00px;background:#d6c88e;"></div>
<div style="left:419.00px;top:271.30px;width:508.70px;height:1.00px;background:#d6c88e;"></div>
<div style="left:209.60px;top:309.40px;width:829.20px;height:1.00px;background:#d6c88e;"></div>
<div style="left:209.60px;top:321.30px;width:829.20px;height:1.00px;background:#d6c88e;"></div>
<div style="left:209.60px;top:333.20px;width:829.20px;height:1.00px;background:#d6c88e;"></div>
<div style="left:209.60px;top:345.00px;width:829.20px;height:1.00px;background:#d6c88e;"></div>
<div style="left:209.60px;top:356.90px;width:829.20px;height:1.00px;background:#d6c88e;"></div>
<div style="left:209.60px;top:368.80px;width:829.20px;height:1.00px;background:#d6c88e;"></div>
<div style="left:209.60px;top:380.60px;width:829.20px;height:1.00px;background:#d6c88e;"></div>
<div style="left:209.60px;top:392.50px;width:829.20px;height:1.00px;background:#d6c88e;"></div>
<div style="left:209.60px;top:257.20px;width:1.00px;height:136.30px;background:#d6c88e;"></div>
<div style="left:419.00px;top:257.20px;width:1.00px;height:136.30px;background:#d6c88e;"></div>
<div style="left:512.80px;top:271.30px;width:1.00px;height:122.20px;background:#d6c88e;"></div>
<div style="left:575.30px;top:257.20px;width:1.00px;height:136.30px;background:#d6c88e;"></div>
<div style="left:676.30px;top:271.30px;width:1.00px;height:122.20px;background:#d6c88e;"></div>
<div style="left:747.60px;top:257.20px;width:1.00px;height:136.30px;background:#d6c88e;"></div>
<div style="left:851.60px;top:271.30px;width:1.00px;height:122.20px;background:#d6c88e;"></div>
<div style="left:926.70px;top:257.20px;width:1.00px;height:136.30px;background:#d6c88e;"></div>
<div style="left:1037.80px;top:257.20px;width:1.00px;height:136.30px;background:#d6c88e;"></div>
<span style="left:212.60px;top:257.50px;font-size:10.60px;line-height:15px;color:#1a1a1a;transform:scaleX(0.9482);transform-origin:0 50%;">Этап процесса</span>
<span style="left:421.80px;top:257.50px;font-size:10.60px;line-height:15px;color:#1a1a1a;transform:scaleX(0.9512);transform-origin:0 50%;">В работе</span>
<span style="left:578.20px;top:257.50px;font-size:10.60px;line-height:15px;color:#1a1a1a;transform:scaleX(0.9667);transform-origin:0 50%;">Выиграно</span>
<span style="left:751.00px;top:257.50px;font-size:10.60px;line-height:15px;color:#1a1a1a;transform:scaleX(0.9219);transform-origin:0 50%;">Проиграно</span>
<span style="left:930.00px;top:257.50px;font-size:10.60px;line-height:15px;color:#1a1a1a;transform:scaleX(0.9461);transform-origin:0 50%;">Продолжительность,</span>
<span style="left:930.00px;top:270.10px;font-size:10.60px;line-height:15px;color:#1a1a1a;transform:scaleX(0.9478);transform-origin:0 50%;">дней</span>
<span style="left:421.80px;top:270.70px;font-size:10.60px;line-height:15px;color:#1a1a1a;transform:scaleX(0.9562);transform-origin:0 50%;">Количество</span>
<span style="left:421.80px;top:283.40px;font-size:10.60px;line-height:15px;color:#1a1a1a;transform:scaleX(0.9793);transform-origin:0 50%;">этапов сделок в</span>
<span style="left:421.80px;top:296.10px;font-size:10.60px;line-height:15px;color:#1a1a1a;transform:scaleX(0.9724);transform-origin:0 50%;">работе</span>
<span style="left:515.60px;top:270.70px;font-size:10.60px;line-height:15px;color:#1a1a1a;transform:scaleX(0.9292);transform-origin:0 50%;">Потенциал</span>
<span style="left:515.60px;top:283.40px;font-size:10.60px;line-height:15px;color:#1a1a1a;transform:scaleX(0.9317);transform-origin:0 50%;">в работе</span>
<span style="left:578.20px;top:270.70px;font-size:10.60px;line-height:15px;color:#1a1a1a;transform:scaleX(0.9562);transform-origin:0 50%;">Количество</span>
<span style="left:578.20px;top:283.40px;font-size:10.60px;line-height:15px;color:#1a1a1a;transform:scaleX(0.9579);transform-origin:0 50%;">выигранных этапов</span>
<span style="left:578.20px;top:296.10px;font-size:10.60px;line-height:15px;color:#1a1a1a;transform:scaleX(0.9864);transform-origin:0 50%;">сделок</span>
<span style="left:679.20px;top:270.70px;font-size:10.60px;line-height:15px;color:#1a1a1a;transform:scaleX(0.9466);transform-origin:0 50%;">Выигранный</span>
<span style="left:679.20px;top:283.40px;font-size:10.60px;line-height:15px;color:#1a1a1a;transform:scaleX(0.9511);transform-origin:0 50%;">потенциал</span>
<span style="left:751.00px;top:270.70px;font-size:10.60px;line-height:15px;color:#1a1a1a;transform:scaleX(0.9562);transform-origin:0 50%;">Количество</span>
<span style="left:751.00px;top:283.40px;font-size:10.60px;line-height:15px;color:#1a1a1a;transform:scaleX(0.9528);transform-origin:0 50%;">проигранных этапов</span>
<span style="left:751.00px;top:296.10px;font-size:10.60px;line-height:15px;color:#1a1a1a;transform:scaleX(0.9864);transform-origin:0 50%;">сделок</span>
<span style="left:854.60px;top:270.70px;font-size:10.60px;line-height:15px;color:#1a1a1a;transform:scaleX(0.9426);transform-origin:0 50%;">Проигранный</span>
<span style="left:854.60px;top:283.40px;font-size:10.60px;line-height:15px;color:#1a1a1a;transform:scaleX(0.9511);transform-origin:0 50%;">потенциал</span>
<span style="left:212.20px;top:309.45px;font-size:9.40px;line-height:13px;color:#111;transform:scaleX(0.9275);transform-origin:0 50%;">Первичный контакт</span>
<span style="left:669.48px;top:309.45px;font-size:9.40px;line-height:13px;color:#111;">2</span>
<span style="left:714.72px;top:309.45px;font-size:9.40px;line-height:13px;color:#111;transform:scaleX(0.9590);transform-origin:100% 50%;">1 769,4</span>
<span style="left:212.20px;top:321.35px;font-size:9.40px;line-height:13px;color:#111;transform:scaleX(0.9161);transform-origin:0 50%;">Квалификация клиента</span>
<span style="left:669.48px;top:321.35px;font-size:9.40px;line-height:13px;color:#111;">2</span>
<span style="left:714.72px;top:321.35px;font-size:9.40px;line-height:13px;color:#111;transform:scaleX(0.9590);transform-origin:100% 50%;">1 769,4</span>
<span style="left:212.20px;top:333.20px;font-size:9.40px;line-height:13px;color:#111;transform:scaleX(0.9160);transform-origin:0 50%;">Формирование предложения</span>
<span style="left:669.48px;top:333.20px;font-size:9.40px;line-height:13px;color:#111;">2</span>
<span style="left:714.72px;top:333.20px;font-size:9.40px;line-height:13px;color:#111;transform:scaleX(0.9590);transform-origin:100% 50%;">1 769,4</span>
<span style="left:212.20px;top:345.05px;font-size:9.40px;line-height:13px;color:#111;transform:scaleX(0.9075);transform-origin:0 50%;">Презентация</span>
<span style="left:669.48px;top:345.05px;font-size:9.40px;line-height:13px;color:#111;">1</span>
<span style="left:722.53px;top:345.05px;font-size:9.40px;line-height:13px;color:#111;transform:scaleX(0.9545);transform-origin:100% 50%;">884,7</span>
<span style="left:212.20px;top:356.95px;font-size:9.40px;line-height:13px;color:#111;transform:scaleX(0.9265);transform-origin:0 50%;">Согласование условий</span>
<span style="left:669.48px;top:356.95px;font-size:9.40px;line-height:13px;color:#111;">1</span>
<span style="left:722.53px;top:356.95px;font-size:9.40px;line-height:13px;color:#111;transform:scaleX(0.9545);transform-origin:100% 50%;">884,7</span>
<span style="left:212.20px;top:368.80px;font-size:9.40px;line-height:13px;color:#111;transform:scaleX(0.9442);transform-origin:0 50%;">Подготовка к выполнению обязательств</span>
<span style="left:669.48px;top:368.80px;font-size:9.40px;line-height:13px;color:#111;">1</span>
<span style="left:722.53px;top:368.80px;font-size:9.40px;line-height:13px;color:#111;transform:scaleX(0.9545);transform-origin:100% 50%;">884,7</span>
<span style="left:212.20px;top:380.65px;font-size:9.40px;line-height:13px;color:#111;transform:scaleX(0.9381);transform-origin:0 50%;">Выполнение обязательств</span>
<span style="left:669.48px;top:380.65px;font-size:9.40px;line-height:13px;color:#111;">2</span>
<span style="left:714.72px;top:380.65px;font-size:9.40px;line-height:13px;color:#111;transform:scaleX(0.9590);transform-origin:100% 50%;">1 769,4</span>
<span style="left:505.98px;top:309.45px;font-size:9.40px;line-height:13px;color:#111;">2</span>
<span style="left:844.78px;top:309.45px;font-size:9.40px;line-height:13px;color:#111;">2</span>
<span style="left:883.38px;top:309.45px;font-size:9.40px;line-height:13px;color:#111;transform:scaleX(0.9252);transform-origin:100% 50%;">10 707,76</span>
<span style="left:1017.95px;top:309.45px;font-size:9.40px;line-height:13px;color:#111;transform:scaleX(0.9315);transform-origin:100% 50%;">5,67</span>
<span style="left:214.60px;top:392.80px;font-size:16.40px;line-height:22px;color:#000;font-weight:bold;transform:scaleX(1.0131);transform-origin:0 50%;">Количество сделок</span>
<div style="left:210.20px;top:412.40px;width:174.60px;height:14.40px;background:#f8f8f8;border:1px solid #eeeeee;"></div>
<svg style="left:0.00px;top:0.00px;overflow:hidden;" width="1100" height="687" viewBox="0 0 1100 687"><path d="M391.10 439.20 V686.40" stroke="#b4b4b4" stroke-width="1.0" fill="none"/><path d="M429.56 439.20 V686.40" stroke="#b4b4b4" stroke-width="1.0" fill="none"/><path d="M468.02 439.20 V686.40" stroke="#b4b4b4" stroke-width="1.0" fill="none"/><path d="M506.48 439.20 V686.40" stroke="#b4b4b4" stroke-width="1.0" fill="none"/><path d="M544.94 439.20 V686.40" stroke="#b4b4b4" stroke-width="1.0" fill="none"/><path d="M583.40 439.20 V686.40" stroke="#b4b4b4" stroke-width="1.0" fill="none"/><path d="M621.86 439.20 V686.40" stroke="#b4b4b4" stroke-width="1.0" fill="none"/><path d="M660.32 439.20 V686.40" stroke="#b4b4b4" stroke-width="1.0" fill="none"/><path d="M391.10 439.20 H660.32" stroke="#b4b4b4" stroke-width="1.0" fill="none"/><path d="M391.10 439.20 L382.90 447.30 V686.40" stroke="#b4b4b4" stroke-width="1.0" fill="none"/><path d="M382.90 456.50 l8.20 -8.10 h76.92 l-8.20 8.10 Z" fill="#ff6874"/><rect x="382.90" y="456.50" width="76.92" height="30.40" fill="#d02935"/><path d="M459.82 456.50 l8.20 -8.10 h76.92 l-8.20 8.10 Z" fill="#ffff45"/><rect x="459.82" y="456.50" width="76.92" height="30.40" fill="#ffe100"/><path d="M536.74 456.50 l8.20 -8.10 h76.92 l-8.20 8.10 Z" fill="#57ff5c"/><rect x="536.74" y="456.50" width="76.92" height="30.40" fill="#1dcc21"/><path d="M613.66 456.50 l8.20 -8.10 v30.40 l-8.20 8.10 Z" fill="#008f00"/><path d="M382.90 503.90 l8.20 -8.10 h76.92 l-8.20 8.10 Z" fill="#ff6874"/><rect x="382.90" y="503.90" width="76.92" height="30.40" fill="#d02935"/><path d="M459.82 503.90 l8.20 -8.10 v30.40 l-8.20 8.10 Z" fill="#008f00"/><path d="M382.90 551.30 l8.20 -8.10 h76.92 l-8.20 8.10 Z" fill="#ff6874"/><rect x="382.90" y="551.30" width="76.92" height="30.40" fill="#d02935"/><path d="M459.82 551.30 l8.20 -8.10 v30.40 l-8.20 8.10 Z" fill="#008f00"/><path d="M382.90 598.70 l8.20 -8.10 h38.46 l-8.20 8.10 Z" fill="#ff6874"/><rect x="382.90" y="598.70" width="38.46" height="30.40" fill="#d02935"/><path d="M421.36 598.70 l8.20 -8.10 v30.40 l-8.20 8.10 Z" fill="#008f00"/><path d="M382.90 646.10 l8.20 -8.10 h38.46 l-8.20 8.10 Z" fill="#ff6874"/><rect x="382.90" y="646.10" width="38.46" height="30.40" fill="#d02935"/><path d="M421.36 646.10 l8.20 -8.10 v30.40 l-8.20 8.10 Z" fill="#008f00"/><path d="M391.4 686.0 V683.4 H429.6 V686.0" fill="none" stroke="#e8626c" stroke-width="1"/></svg>
<span style="left:295.10px;top:464.50px;font-size:9.60px;line-height:14px;color:#333;transform:scaleX(0.9410);transform-origin:100% 50%;">Первичный контакт</span>
<span style="left:277.49px;top:511.90px;font-size:9.60px;line-height:14px;color:#333;transform:scaleX(0.9432);transform-origin:100% 50%;">Квалификация клиента</span>
<span style="left:252.23px;top:559.30px;font-size:9.60px;line-height:14px;color:#333;transform:scaleX(0.9399);transform-origin:100% 50%;">Формирование предложения</span>
<span style="left:323.65px;top:606.70px;font-size:9.60px;line-height:14px;color:#333;transform:scaleX(0.9387);transform-origin:100% 50%;">Презентация</span>
<span style="left:279.54px;top:654.10px;font-size:9.60px;line-height:14px;color:#333;transform:scaleX(0.9269);transform-origin:100% 50%;">Согласование условий</span>
<div style="left:664.50px;top:492.00px;width:9.80px;height:9.80px;background:#d02935;border:1px solid #b4767b;"></div>
<span style="left:677.80px;top:490.20px;font-size:9.60px;line-height:14px;color:#333;transform:scaleX(0.8696);transform-origin:0 50%;">Выиграна</span>
<div style="left:664.50px;top:609.20px;width:9.80px;height:9.80px;background:#ffe100;border:1px solid #c9b86a;"></div>
<span style="left:677.80px;top:607.40px;font-size:9.60px;line-height:14px;color:#333;transform:scaleX(0.8703);transform-origin:0 50%;">В работе</span>
<svg style="left:1052.60px;top:194.60px;" width="7" height="5" viewBox="0 0 7 5"><path d="M0 4.6 H7 L3.5 .4 Z" fill="#c9c9c9"/></svg>
<div style="left:1053.40px;top:205.60px;width:5.60px;height:462.00px;background:#dcdcdc;border-radius:3px;"></div>
<div style="left:1053.40px;top:207.20px;width:5.60px;height:212.00px;background:#a8a8a8;border-radius:3px;"></div>
<svg style="left:1053.00px;top:675.00px;" width="6" height="4.4" viewBox="0 0 6 4.4"><path d="M.2 .4 H5.8 L3 4 Z" fill="#333"/></svg>
<svg style="left:193.00px;top:687.80px;" width="5" height="7" viewBox="0 0 5 7"><path d="M4.6 0 V7 L.4 3.5 Z" fill="#c9c9c9"/></svg>
<div style="left:205.60px;top:688.40px;width:826.00px;height:5.60px;background:#dcdcdc;border-radius:3px;"></div>
<div style="left:205.60px;top:688.40px;width:736.60px;height:5.60px;background:#a8a8a8;border-radius:3px;"></div>
<svg style="left:1040.00px;top:688.40px;" width="4.4" height="6" viewBox="0 0 4.4 6"><path d="M.4 .2 V5.8 L4 3 Z" fill="#333"/></svg>
<div style="left:1012.80px;top:696.40px;width:68.00px;height:14.40px;background:#fff;border-top:1.3px solid #f2d874;border-left:1.3px solid #f2d874;"></div>
<div style="left:1014.00px;top:707.60px;width:66.80px;height:3.20px;background:linear-gradient(#f2f2f2,#d8d8da);"></div>
<svg style="left:1034.60px;top:708.60px;" width="6" height="2.4" viewBox="0 0 6 2.4"><path d="M.4 2.4 A2.6 2.6 0 0 1 5.6 2.4" fill="none" stroke="#777" stroke-width=".7"/></svg>
<div style="left:1105.60px;top:98.00px;width:4.00px;height:7.00px;background:#a9a9a9;border-radius:1.5px;"></div>
<div style="left:1105.60px;top:124.50px;width:4.00px;height:35.50px;background:#a9a9a9;border-radius:1.5px;"></div>
<div style="left:1105.60px;top:166.00px;width:4.00px;height:35.00px;background:#a9a9a9;border-radius:1.5px;"></div>
<div style="left:1453.40px;top:160.00px;width:3.20px;height:36.00px;background:#a6a6a6;border-radius:1.5px;"></div>
<div style="left:1108.00px;top:8.20px;width:347.00px;height:706.40px;border-radius:47.0px;background:#939393;"></div>
<div style="left:1109.10px;top:9.30px;width:344.80px;height:704.20px;border-radius:45.9px;background:#d0d0d0;"></div>
<div style="left:1110.20px;top:10.40px;width:342.60px;height:702.00px;border-radius:44.8px;background:#dedede;"></div>
<div style="left:1111.30px;top:11.50px;width:340.40px;height:699.80px;border-radius:43.7px;background:#bcbcbc;"></div>
<div style="left:1112.20px;top:12.40px;width:338.60px;height:698.00px;border-radius:42.8px;background:#f4f4f4;"></div>
<div style="left:1113.00px;top:13.20px;width:337.00px;height:696.40px;border-radius:42.0px;background:linear-gradient(#f8f8f8,#f6f6f6 50%,#f0f0f0);box-shadow:inset 0 0 5px 5px #fdfdfd;"></div>
<div style="left:1276.80px;top:27.40px;width:8.40px;height:8.40px;border-radius:50%;background:radial-gradient(circle,#3a3a3a 0,#1c1c1c 70%);box-shadow:0 0 0 1.2px #fdfdfd;"></div>
<div style="left:1220.20px;top:49.00px;width:11.80px;height:11.80px;border-radius:50%;background:radial-gradient(circle at 50% 50%,#2b479a 0,#1a2440 35%,#15161c 60%,#303034 100%);box-shadow:0 0 0 1.3px #fdfdfd;"></div>
<div style="left:1253.00px;top:51.60px;width:56.40px;height:6.20px;border-radius:3.2px;background:#3a3a3a;box-shadow:0 0 0 1.2px #fdfdfd;"></div>
<div style="left:1254.80px;top:642.60px;width:52.00px;height:52.00px;border-radius:50%;background:conic-gradient(from 300deg,#6e6e6e,#d8d8d8 18%,#f4f4f4 30%,#cfcfcf 42%,#5c5c5c 52%,#d0d0d0 68%,#f4f4f4 80%,#c8c8c8 92%,#6e6e6e);"></div>
<div style="left:1256.80px;top:644.60px;width:48.00px;height:48.00px;border-radius:50%;background:#f3f3f3;box-shadow:0 0 1px 0.5px #fff;"></div>
<div style="left:1126.50px;top:91.90px;width:308.70px;height:0.90px;background:#3a3a3a;"></div>
<div style="left:1126.50px;top:92.80px;width:0.90px;height:539.40px;background:linear-gradient(#333 0,#3a3a3a 12%,#c2c2c2 15%,#c8c8c8 100%);"></div>
<div style="left:1433.20px;top:92.80px;width:2.00px;height:540.20px;background:linear-gradient(90deg,#3c3c3c,#4a4a4a 70%,#8a8a8a);"></div>
<div style="left:1127.40px;top:632.20px;width:305.80px;height:0.80px;background:#9c9c9c;"></div>
<div style="left:1127.40px;top:92.80px;width:305.80px;height:539.40px;background:#fff;"></div>
<div style="left:0;top:0;width:1433.2px;height:632.2px;overflow:hidden;">
<div style="left:1127.40px;top:92.80px;width:305.80px;height:44.20px;background:#ffea4e;"></div>
<div style="left:1127.40px;top:137.00px;width:305.80px;height:23.20px;background:#f1f1f1;"></div>
<div style="left:1127.40px;top:137.60px;width:239.20px;height:22.00px;background:#fff;"></div>
<div style="left:1371.20px;top:138.80px;width:61.20px;height:20.20px;background:#fff;border-radius:5px;"></div>
<div style="left:1127.40px;top:160.20px;width:305.80px;height:27.60px;background:#f3f3f3;"></div>
<span style="left:1132.80px;top:95.30px;font-size:9.40px;line-height:13px;color:#1a1a1a;transform:scaleX(0.9918);transform-origin:0 50%;">Нет SIM-карты</span>
<svg style="left:1200.00px;top:97.20px;" width="11.4" height="8.6" viewBox="0 0 11.4 8.6"><path d="M.6 3 A7.4 7.4 0 0 1 10.8 3" fill="none" stroke="#1a1a1a" stroke-width="1.5"/><path d="M2.6 5.2 A4.6 4.6 0 0 1 8.8 5.2" fill="none" stroke="#1a1a1a" stroke-width="1.5"/><path d="M4.3 6.9 A2.2 2.2 0 0 1 7.1 6.9 L5.7 8.5 Z" fill="#1a1a1a"/></svg>
<span style="left:1269.61px;top:95.30px;font-size:9.40px;line-height:13px;color:#1a1a1a;font-weight:bold;transform:scaleX(1.1174);transform-origin:50% 50%;">15:46</span>
<div style="left:1403.20px;top:97.00px;width:18.40px;height:9.20px;border:1px solid #b39e35;border-radius:2.6px;background:#ffea4e;"></div>
<div style="left:1404.80px;top:98.60px;width:15.20px;height:6.00px;border-radius:1.4px;background:#3fd15b;"></div>
<div style="left:1421.80px;top:100.00px;width:1.40px;height:3.20px;background:#b39e35;border-radius:0 1px 1px 0;"></div>
<svg style="left:1425.60px;top:96.80px;" width="5" height="9.6" viewBox="0 0 5 9.6"><path d="M3.2 0 L.2 5.4 H2.4 L1.6 9.6 L4.8 3.8 H2.6 Z" fill="#1a1a1a"/></svg>
<svg style="left:1136.40px;top:121.60px;" width="5" height="9" viewBox="0 0 5 9"><path d="M4.4 .5 L.8 4.5 L4.4 8.5" fill="none" stroke="#3d3d3d" stroke-width="1.1"/></svg>
<span style="left:1246.53px;top:119.80px;font-size:8.60px;line-height:12px;color:#1a1a1a;font-weight:bold;transform:scaleX(0.7798);transform-origin:50% 50%;">Воронка продаж</span>
<span style="left:1133.60px;top:142.70px;font-size:8.60px;line-height:12px;color:#333;transform:scaleX(0.7803);transform-origin:0 50%;">Выбрать период...</span>
<svg style="left:1355.80px;top:145.40px;" width="4.4" height="7" viewBox="0 0 4.4 7"><path d="M.6 .5 L3.6 3.5 L.6 6.5" fill="none" stroke="#8a8a8a" stroke-width="1"/></svg>
<div style="left:1376.80px;top:139.80px;width:19.60px;height:17.60px;border-radius:9px;border:1px solid #efefef;background:#fff;"></div>
<div style="left:1377.00px;top:140.00px;width:17.20px;height:17.20px;border-radius:50%;border:1px solid #ebebeb;background:#fff;box-shadow:0 1px 1.5px rgba(0,0,0,.06);"></div>
<span style="left:1400.20px;top:143.00px;font-size:8.60px;line-height:12px;color:#b4b4b4;transform:scaleX(0.7746);transform-origin:0 50%;">Период:</span>
<span style="left:1135.00px;top:167.50px;font-size:8.80px;line-height:13px;color:#12994a;font-weight:bold;transform:scaleX(0.7610);transform-origin:0 50%;">Сформировать</span>
<span style="left:1189.00px;top:167.50px;font-size:8.80px;line-height:13px;color:#12994a;transform:scaleX(0.7609);transform-origin:0 50%;">Настройки...</span>
<svg style="left:1229.40px;top:167.60px;" width="10.8" height="13" viewBox="0 0 10.8 13"><path d="M.4 1.4 H3.2 L4 2.6 H7.2 V8.4 H.4 Z" fill="#f3d06a" stroke="#cfa23a" stroke-width=".7"/><rect x="3.8" y="4" width="6.4" height="8.4" fill="#fff" stroke="#9aa3b2" stroke-width=".7"/><rect x="4.8" y="5.2" width="4.4" height="1.3" fill="#6aa7e4"/><rect x="4.9" y="7.6" width="1.8" height="3.6" fill="#e2604f"/><rect x="7.3" y="8.8" width="1.8" height="2.4" fill="#5fc25f"/></svg>
<span style="left:1241.20px;top:167.50px;font-size:8.80px;line-height:13px;color:#12994a;transform:scaleX(0.7644);transform-origin:0 50%;">Варианты отчета</span>
<svg style="left:1296.40px;top:171.00px;" width="4" height="6.4" viewBox="0 0 4 6.4"><path d="M.6 .5 L3.2 3.2 L.6 5.9" fill="none" stroke="#12994a" stroke-width="1.2"/></svg>
<span style="left:1303.60px;top:167.50px;font-size:8.80px;line-height:13px;color:#12994a;transform:scaleX(0.7645);transform-origin:0 50%;">Найти...</span>
<svg style="left:1330.60px;top:168.40px;" width="10" height="12" viewBox="0 0 10 12"><path d="M3.2 1.8 H6.4 L8.4 3.8 V9.2 H3.2 Z" fill="#fff" stroke="#4db373" stroke-width=".7"/><path d="M4.8 3.6 H7.6 L9.6 5.6 V11.4 H4.8 Z" fill="#fff" stroke="#4db373" stroke-width=".7"/><path d="M6.6 6.6 V10 M7.9 7.2 V9.6" stroke="#4db373" stroke-width=".7"/><rect x=".3" y=".5" width="2" height="2" fill="none" stroke="#4db373" stroke-width=".5"/></svg>
<svg style="left:1342.60px;top:168.40px;" width="10" height="12" viewBox="0 0 10 12"><path d="M3.2 1.8 H6.4 L8.4 3.8 V9.2 H3.2 Z" fill="#fff" stroke="#4db373" stroke-width=".7"/><path d="M4.8 3.6 H7.6 L9.6 5.6 V11.4 H4.8 Z" fill="#fff" stroke="#4db373" stroke-width=".7"/><path d="M6.6 6.6 V10 M7.9 7.2 V9.6" stroke="#4db373" stroke-width=".7"/><rect x=".3" y=".5" width="2" height="2" fill="none" stroke="#4db373" stroke-width=".5"/></svg>
<svg style="left:1355.80px;top:168.80px;" width="7.2" height="10.6" viewBox="0 0 7.2 10.6"><path d="M6.5 2.6 V.7 H.8 L4 5.3 L.8 9.9 H6.5 V8" fill="none" stroke="#2a2a2a" stroke-width=".95"/></svg>
<svg style="left:1367.80px;top:169.60px;" width="8.2" height="9.2" viewBox="0 0 8.2 9.2"><rect x="2" y=".4" width="4.2" height="2.6" fill="#fff" stroke="#12994a" stroke-width=".7"/><rect x=".3" y="2.8" width="7.6" height="3.8" rx=".9" fill="#12994a"/><rect x="2" y="5.4" width="4.2" height="3.2" fill="#fff" stroke="#12994a" stroke-width=".7"/></svg>
<svg style="left:1379.80px;top:168.60px;" width="9.4" height="11.4" viewBox="0 0 9.4 11.4"><path d="M.5 .5 H4 L6 2.5 V8.6 H.5 Z" fill="#fff" stroke="#3aa866" stroke-width=".7"/><circle cx="5.6" cy="7.2" r="1.9" fill="#fff" stroke="#12994a" stroke-width=".8"/><path d="M7 8.7 L8.9 10.8" stroke="#12994a" stroke-width=".9"/></svg>
<span style="left:1398.80px;top:167.50px;font-size:8.80px;line-height:13px;color:#12994a;transform:scaleX(0.7260);transform-origin:0 50%;">Еще</span>
<svg style="left:1413.40px;top:171.00px;" width="4" height="6.4" viewBox="0 0 4 6.4"><path d="M.6 .5 L3.2 3.2 L.6 5.9" fill="none" stroke="#12994a" stroke-width="1.2"/></svg>
<span style="left:1422.53px;top:167.20px;font-size:9.60px;line-height:14px;color:#222;transform:scaleX(0.8608);transform-origin:50% 50%;">?</span>
<div style="left:1129.00px;top:205.00px;width:3.80px;height:6.60px;border:0.9px solid #9ad4a6;border-radius:1.8px;"></div>
<div style="left:1129.60px;top:207.90px;width:2.60px;height:0.80px;background:#9ad4a6;"></div>
<div style="left:1130.60px;top:211.60px;width:0.70px;height:6.00px;background:#dcdcdc;"></div>
<span style="left:1137.00px;top:193.30px;font-size:9.20px;line-height:13px;color:#1c1c1c;font-weight:bold;transform:scaleX(0.7852);transform-origin:0 50%;">Воронка продаж</span>
<span style="left:1135.40px;top:204.40px;font-size:15.00px;line-height:20px;color:#3a3a3a;transform:scale(0.2417,0.3333);transform-origin:0 50%;-webkit-text-stroke:.3px #3a3a3a;">Отбор:</span>
<span style="left:1155.00px;top:204.40px;font-size:15.00px;line-height:20px;color:#3a3a3a;transform:scale(0.2632,0.3333);transform-origin:0 50%;-webkit-text-stroke:.3px #3a3a3a;">Непомеченные на удаление</span>
<div style="left:1134.40px;top:222.60px;width:298.80px;height:25.10px;background:#f5edc6;"></div>
<div style="left:1225.30px;top:229.10px;width:207.90px;height:0.60px;background:#e9dfb2;"></div>
<div style="left:1134.40px;top:254.37px;width:298.80px;height:0.60px;background:#f0ead2;"></div>
<div style="left:1134.40px;top:261.04px;width:298.80px;height:0.60px;background:#f0ead2;"></div>
<div style="left:1134.40px;top:267.71px;width:298.80px;height:0.60px;background:#f0ead2;"></div>
<div style="left:1134.40px;top:274.38px;width:298.80px;height:0.60px;background:#f0ead2;"></div>
<div style="left:1134.40px;top:281.05px;width:298.80px;height:0.60px;background:#f0ead2;"></div>
<div style="left:1134.40px;top:287.72px;width:298.80px;height:0.60px;background:#f0ead2;"></div>
<div style="left:1134.40px;top:294.39px;width:298.80px;height:0.60px;background:#f0ead2;"></div>
<div style="left:1225.30px;top:222.60px;width:0.60px;height:25.10px;background:#e9dfb2;"></div>
<div style="left:1225.30px;top:247.70px;width:0.60px;height:46.69px;background:#f0ead2;"></div>
<div style="left:1266.40px;top:229.10px;width:0.60px;height:18.60px;background:#e9dfb2;"></div>
<div style="left:1266.40px;top:247.70px;width:0.60px;height:46.69px;background:#f0ead2;"></div>
<div style="left:1294.40px;top:222.60px;width:0.60px;height:25.10px;background:#e9dfb2;"></div>
<div style="left:1294.40px;top:247.70px;width:0.60px;height:46.69px;background:#f0ead2;"></div>
<div style="left:1338.70px;top:229.10px;width:0.60px;height:18.60px;background:#e9dfb2;"></div>
<div style="left:1338.70px;top:247.70px;width:0.60px;height:46.69px;background:#f0ead2;"></div>
<div style="left:1370.60px;top:222.60px;width:0.60px;height:25.10px;background:#e9dfb2;"></div>
<div style="left:1370.60px;top:247.70px;width:0.60px;height:46.69px;background:#f0ead2;"></div>
<div style="left:1415.60px;top:229.10px;width:0.60px;height:18.60px;background:#e9dfb2;"></div>
<div style="left:1415.60px;top:247.70px;width:0.60px;height:46.69px;background:#f0ead2;"></div>
<span style="left:1135.40px;top:216.20px;font-size:15.00px;line-height:20px;color:#3a3a3a;transform:scale(0.2650,0.3333);transform-origin:0 50%;-webkit-text-stroke:.3px #3a3a3a;">Этап процесса</span>
<span style="left:1227.30px;top:216.20px;font-size:15.00px;line-height:20px;color:#3a3a3a;transform:scale(0.2607,0.3333);transform-origin:0 50%;-webkit-text-stroke:.3px #3a3a3a;">В работе</span>
<span style="left:1295.90px;top:216.20px;font-size:15.00px;line-height:20px;color:#3a3a3a;transform:scale(0.2619,0.3333);transform-origin:0 50%;-webkit-text-stroke:.3px #3a3a3a;">Выиграно</span>
<span style="left:1372.00px;top:216.20px;font-size:15.00px;line-height:20px;color:#3a3a3a;transform:scale(0.2586,0.3333);transform-origin:0 50%;-webkit-text-stroke:.3px #3a3a3a;">Проиграно</span>
<span style="left:1227.30px;top:222.80px;font-size:15.00px;line-height:20px;color:#3a3a3a;transform:scale(0.2623,0.3333);transform-origin:0 50%;-webkit-text-stroke:.3px #3a3a3a;">Количество этапов</span>
<span style="left:1227.30px;top:228.70px;font-size:15.00px;line-height:20px;color:#3a3a3a;transform:scale(0.2639,0.3333);transform-origin:0 50%;-webkit-text-stroke:.3px #3a3a3a;">сделок в работе</span>
<span style="left:1268.40px;top:222.80px;font-size:15.00px;line-height:20px;color:#3a3a3a;transform:scale(0.2649,0.3333);transform-origin:0 50%;-webkit-text-stroke:.3px #3a3a3a;">Потенциал в</span>
<span style="left:1268.40px;top:228.70px;font-size:15.00px;line-height:20px;color:#3a3a3a;transform:scale(0.2586,0.3333);transform-origin:0 50%;-webkit-text-stroke:.3px #3a3a3a;">работе</span>
<span style="left:1295.90px;top:222.80px;font-size:15.00px;line-height:20px;color:#3a3a3a;transform:scale(0.2644,0.3333);transform-origin:0 50%;-webkit-text-stroke:.3px #3a3a3a;">Количество</span>
<span style="left:1295.90px;top:228.70px;font-size:15.00px;line-height:20px;color:#3a3a3a;transform:scale(0.2628,0.3333);transform-origin:0 50%;-webkit-text-stroke:.3px #3a3a3a;">выигранных этапов</span>
<span style="left:1295.90px;top:234.50px;font-size:15.00px;line-height:20px;color:#3a3a3a;transform:scale(0.2608,0.3333);transform-origin:0 50%;-webkit-text-stroke:.3px #3a3a3a;">сделок</span>
<span style="left:1340.20px;top:222.80px;font-size:15.00px;line-height:20px;color:#3a3a3a;transform:scale(0.2630,0.3333);transform-origin:0 50%;-webkit-text-stroke:.3px #3a3a3a;">Выигранный</span>
<span style="left:1340.20px;top:228.70px;font-size:15.00px;line-height:20px;color:#3a3a3a;transform:scale(0.2666,0.3333);transform-origin:0 50%;-webkit-text-stroke:.3px #3a3a3a;">потенциал</span>
<span style="left:1372.00px;top:222.80px;font-size:15.00px;line-height:20px;color:#3a3a3a;transform:scale(0.2619,0.3333);transform-origin:0 50%;-webkit-text-stroke:.3px #3a3a3a;">Количество</span>
<span style="left:1372.00px;top:228.70px;font-size:15.00px;line-height:20px;color:#3a3a3a;transform:scale(0.2628,0.3333);transform-origin:0 50%;-webkit-text-stroke:.3px #3a3a3a;">проигранных этапов</span>
<span style="left:1372.00px;top:234.50px;font-size:15.00px;line-height:20px;color:#3a3a3a;transform:scale(0.2587,0.3333);transform-origin:0 50%;-webkit-text-stroke:.3px #3a3a3a;">сделок</span>
<span style="left:1417.20px;top:222.80px;font-size:15.00px;line-height:20px;color:#3a3a3a;transform:scale(0.2667,0.3333);transform-origin:0 50%;-webkit-text-stroke:.3px #3a3a3a;">Проигранный</span>
<span style="left:1417.20px;top:228.70px;font-size:15.00px;line-height:20px;color:#3a3a3a;transform:scale(0.2666,0.3333);transform-origin:0 50%;-webkit-text-stroke:.3px #3a3a3a;">потенциал</span>
<span style="left:1135.40px;top:240.60px;font-size:15.00px;line-height:20px;color:#3a3a3a;transform:scale(0.2203,0.3333);transform-origin:0 50%;-webkit-text-stroke:.3px #3a3a3a;">Первичный контакт</span>
<span style="left:1328.86px;top:240.60px;font-size:15.00px;line-height:20px;color:#555;transform:scale(0.3333,0.3333);transform-origin:100% 50%;-webkit-text-stroke:.3px #555;">2</span>
<span style="left:1318.85px;top:240.60px;font-size:15.00px;line-height:20px;color:#555;transform:scale(0.2218,0.3333);transform-origin:100% 50%;-webkit-text-stroke:.3px #555;">1 769,4</span>
<span style="left:1135.40px;top:247.27px;font-size:15.00px;line-height:20px;color:#3a3a3a;transform:scale(0.2212,0.3333);transform-origin:0 50%;-webkit-text-stroke:.3px #3a3a3a;">Квалификация клиента</span>
<span style="left:1328.86px;top:247.27px;font-size:15.00px;line-height:20px;color:#555;transform:scale(0.3333,0.3333);transform-origin:100% 50%;-webkit-text-stroke:.3px #555;">2</span>
<span style="left:1318.85px;top:247.27px;font-size:15.00px;line-height:20px;color:#555;transform:scale(0.2218,0.3333);transform-origin:100% 50%;-webkit-text-stroke:.3px #555;">1 769,4</span>
<span style="left:1135.40px;top:253.94px;font-size:15.00px;line-height:20px;color:#3a3a3a;transform:scale(0.2205,0.3333);transform-origin:0 50%;-webkit-text-stroke:.3px #3a3a3a;">Формирование предложения</span>
<span style="left:1328.86px;top:253.94px;font-size:15.00px;line-height:20px;color:#555;transform:scale(0.3333,0.3333);transform-origin:100% 50%;-webkit-text-stroke:.3px #555;">2</span>
<span style="left:1318.85px;top:253.94px;font-size:15.00px;line-height:20px;color:#555;transform:scale(0.2218,0.3333);transform-origin:100% 50%;-webkit-text-stroke:.3px #555;">1 769,4</span>
<span style="left:1135.40px;top:260.61px;font-size:15.00px;line-height:20px;color:#3a3a3a;transform:scale(0.2251,0.3333);transform-origin:0 50%;-webkit-text-stroke:.3px #3a3a3a;">Презентация</span>
<span style="left:1328.86px;top:260.61px;font-size:15.00px;line-height:20px;color:#555;transform:scale(0.3333,0.3333);transform-origin:100% 50%;-webkit-text-stroke:.3px #555;">1</span>
<span style="left:1331.35px;top:260.61px;font-size:15.00px;line-height:20px;color:#555;transform:scale(0.2211,0.3333);transform-origin:100% 50%;-webkit-text-stroke:.3px #555;">884,7</span>
<span style="left:1135.40px;top:267.28px;font-size:15.00px;line-height:20px;color:#3a3a3a;transform:scale(0.2206,0.3333);transform-origin:0 50%;-webkit-text-stroke:.3px #3a3a3a;">Согласование условий</span>
<span style="left:1328.86px;top:267.28px;font-size:15.00px;line-height:20px;color:#555;transform:scale(0.3333,0.3333);transform-origin:100% 50%;-webkit-text-stroke:.3px #555;">1</span>
<span style="left:1331.35px;top:267.28px;font-size:15.00px;line-height:20px;color:#555;transform:scale(0.2211,0.3333);transform-origin:100% 50%;-webkit-text-stroke:.3px #555;">884,7</span>
<span style="left:1135.40px;top:273.95px;font-size:15.00px;line-height:20px;color:#3a3a3a;transform:scale(0.2206,0.3333);transform-origin:0 50%;-webkit-text-stroke:.3px #3a3a3a;">Подготовка к выполнению обязательств</span>
<span style="left:1328.86px;top:273.95px;font-size:15.00px;line-height:20px;color:#555;transform:scale(0.3333,0.3333);transform-origin:100% 50%;-webkit-text-stroke:.3px #555;">1</span>
<span style="left:1331.35px;top:273.95px;font-size:15.00px;line-height:20px;color:#555;transform:scale(0.2211,0.3333);transform-origin:100% 50%;-webkit-text-stroke:.3px #555;">884,7</span>
<span style="left:1135.40px;top:280.62px;font-size:15.00px;line-height:20px;color:#3a3a3a;transform:scale(0.2135,0.3333);transform-origin:0 50%;-webkit-text-stroke:.3px #3a3a3a;">Выполнение обязательств</span>
<span style="left:1328.86px;top:280.62px;font-size:15.00px;line-height:20px;color:#555;transform:scale(0.3333,0.3333);transform-origin:100% 50%;-webkit-text-stroke:.3px #555;">2</span>
<span style="left:1318.85px;top:280.62px;font-size:15.00px;line-height:20px;color:#555;transform:scale(0.2218,0.3333);transform-origin:100% 50%;-webkit-text-stroke:.3px #555;">1 769,4</span>
<span style="left:1256.66px;top:240.60px;font-size:15.00px;line-height:20px;color:#555;transform:scale(0.3333,0.3333);transform-origin:100% 50%;-webkit-text-stroke:.3px #555;">2</span>
<span style="left:1405.56px;top:240.60px;font-size:15.00px;line-height:20px;color:#555;transform:scale(0.3333,0.3333);transform-origin:100% 50%;-webkit-text-stroke:.3px #555;">1</span>
<span style="left:1136.80px;top:293.80px;font-size:8.00px;line-height:12px;color:#1c1c1c;font-weight:bold;transform:scaleX(0.7953);transform-origin:0 50%;">Количество сделок</span>
<svg style="left:0.00px;top:0.00px;pointer-events:none;" width="1473" height="738" viewBox="0 0 1473 738"><path d="M1203.30 317.20 V498.00" stroke="#cfcfcf" stroke-width="0.7" fill="none"/><path d="M1224.48 317.20 V498.00" stroke="#cfcfcf" stroke-width="0.7" fill="none"/><path d="M1245.66 317.20 V498.00" stroke="#cfcfcf" stroke-width="0.7" fill="none"/><path d="M1266.84 317.20 V498.00" stroke="#cfcfcf" stroke-width="0.7" fill="none"/><path d="M1288.02 317.20 V498.00" stroke="#cfcfcf" stroke-width="0.7" fill="none"/><path d="M1309.20 317.20 V498.00" stroke="#cfcfcf" stroke-width="0.7" fill="none"/><path d="M1330.38 317.20 V498.00" stroke="#cfcfcf" stroke-width="0.7" fill="none"/><path d="M1203.30 317.20 H1330.38" stroke="#cfcfcf" stroke-width="0.7" fill="none"/><path d="M1203.30 317.20 L1200.20 321.20 V498.00" stroke="#cfcfcf" stroke-width="0.7" fill="none"/><path d="M1200.20 326.70 l3.10 -4.00 h42.36 l-3.10 4.00 Z" fill="#ff6874"/><rect x="1200.20" y="326.70" width="42.36" height="16.60" fill="#d02935"/><path d="M1242.56 326.70 l3.10 -4.00 v16.60 l-3.10 4.00 Z" fill="#008f00"/><path d="M1200.20 352.50 l3.10 -4.00 h21.18 l-3.10 4.00 Z" fill="#ff6874"/><rect x="1200.20" y="352.50" width="21.18" height="16.60" fill="#d02935"/><path d="M1221.38 352.50 l3.10 -4.00 v16.60 l-3.10 4.00 Z" fill="#008f00"/><path d="M1200.20 378.30 l3.10 -4.00 h21.18 l-3.10 4.00 Z" fill="#ff6874"/><rect x="1200.20" y="378.30" width="21.18" height="16.60" fill="#d02935"/><path d="M1221.38 378.30 l3.10 -4.00 v16.60 l-3.10 4.00 Z" fill="#008f00"/><path d="M1200.20 404.10 l3.10 -4.00 h21.18 l-3.10 4.00 Z" fill="#ff6874"/><rect x="1200.20" y="404.10" width="21.18" height="16.60" fill="#d02935"/><path d="M1221.38 404.10 l3.10 -4.00 v16.60 l-3.10 4.00 Z" fill="#008f00"/><path d="M1200.20 429.90 l3.10 -4.00 h42.36 l-3.10 4.00 Z" fill="#ff6874"/><rect x="1200.20" y="429.90" width="42.36" height="16.60" fill="#d02935"/><path d="M1242.56 429.90 l3.10 -4.00 v16.60 l-3.10 4.00 Z" fill="#008f00"/><path d="M1200.20 455.70 l3.10 -4.00 h42.36 l-3.10 4.00 Z" fill="#ff6874"/><rect x="1200.20" y="455.70" width="42.36" height="16.60" fill="#d02935"/><path d="M1242.56 455.70 l3.10 -4.00 v16.60 l-3.10 4.00 Z" fill="#008f00"/><path d="M1200.20 481.50 l3.10 -4.00 h42.36 l-3.10 4.00 Z" fill="#ff6874"/><rect x="1200.20" y="481.50" width="42.36" height="16.60" fill="#d02935"/><path d="M1242.56 481.50 l3.10 -4.00 h42.36 l-3.10 4.00 Z" fill="#ffff45"/><rect x="1242.56" y="481.50" width="42.36" height="16.60" fill="#ffe100"/><path d="M1284.92 481.50 l3.10 -4.00 h21.18 l-3.10 4.00 Z" fill="#57ff5c"/><rect x="1284.92" y="481.50" width="21.18" height="16.60" fill="#1dcc21"/><path d="M1306.10 481.50 l3.10 -4.00 v16.60 l-3.10 4.00 Z" fill="#008f00"/><path d="M1200.2 501.6 H1327.3" fill="none" stroke="#c4c4c4" stroke-width=".7"/><path d="M1203.30 498.0 L1200.20 501.6 v1.4" fill="none" stroke="#cfcfcf" stroke-width=".6"/><path d="M1224.48 498.0 L1221.38 501.6 v1.4" fill="none" stroke="#cfcfcf" stroke-width=".6"/><path d="M1245.66 498.0 L1242.56 501.6 v1.4" fill="none" stroke="#cfcfcf" stroke-width=".6"/><path d="M1266.84 498.0 L1263.74 501.6 v1.4" fill="none" stroke="#cfcfcf" stroke-width=".6"/><path d="M1288.02 498.0 L1284.92 501.6 v1.4" fill="none" stroke="#cfcfcf" stroke-width=".6"/><path d="M1309.20 498.0 L1306.10 501.6 v1.4" fill="none" stroke="#cfcfcf" stroke-width=".6"/><path d="M1330.38 498.0 L1327.28 501.6 v1.4" fill="none" stroke="#cfcfcf" stroke-width=".6"/></svg>
<span style="left:1197.29px;top:496.70px;font-size:12.60px;line-height:17px;color:#444;transform:scale(0.3333,0.3333);transform-origin:50% 50%;-webkit-text-stroke:.3px #444;">0</span>
<span style="left:1218.47px;top:496.70px;font-size:12.60px;line-height:17px;color:#444;transform:scale(0.3333,0.3333);transform-origin:50% 50%;-webkit-text-stroke:.3px #444;">1</span>
<span style="left:1239.65px;top:496.70px;font-size:12.60px;line-height:17px;color:#444;transform:scale(0.3333,0.3333);transform-origin:50% 50%;-webkit-text-stroke:.3px #444;">2</span>
<span style="left:1260.83px;top:496.70px;font-size:12.60px;line-height:17px;color:#444;transform:scale(0.3333,0.3333);transform-origin:50% 50%;-webkit-text-stroke:.3px #444;">3</span>
<span style="left:1282.01px;top:496.70px;font-size:12.60px;line-height:17px;color:#444;transform:scale(0.3333,0.3333);transform-origin:50% 50%;-webkit-text-stroke:.3px #444;">4</span>
<span style="left:1303.19px;top:496.70px;font-size:12.60px;line-height:17px;color:#444;transform:scale(0.3333,0.3333);transform-origin:50% 50%;-webkit-text-stroke:.3px #444;">5</span>
<span style="left:1324.37px;top:496.70px;font-size:12.60px;line-height:17px;color:#444;transform:scale(0.3333,0.3333);transform-origin:50% 50%;-webkit-text-stroke:.3px #444;">6</span>
<span style="left:1207.11px;top:502.70px;font-size:12.60px;line-height:17px;color:#444;transform:scale(0.2694,0.3333);transform-origin:50% 50%;-webkit-text-stroke:.3px #444;">Количество сделок</span>
<span style="left:1036.95px;top:326.00px;font-size:13.20px;line-height:18px;color:#444;transform:scale(0.2564,0.3333);transform-origin:100% 50%;-webkit-text-stroke:.3px #444;">Выполнение обязательств</span>
<span style="left:953.68px;top:351.80px;font-size:13.20px;line-height:18px;color:#444;transform:scale(0.2542,0.3333);transform-origin:100% 50%;-webkit-text-stroke:.3px #444;">Подготовка к выполнению обязательств</span>
<span style="left:1058.92px;top:377.60px;font-size:13.20px;line-height:18px;color:#444;transform:scale(0.2538,0.3333);transform-origin:100% 50%;-webkit-text-stroke:.3px #444;">Согласование условий</span>
<span style="left:1119.53px;top:403.40px;font-size:13.20px;line-height:18px;color:#444;transform:scale(0.2586,0.3333);transform-origin:100% 50%;-webkit-text-stroke:.3px #444;">Презентация</span>
<span style="left:1021.37px;top:429.20px;font-size:13.20px;line-height:18px;color:#444;transform:scale(0.2542,0.3333);transform-origin:100% 50%;-webkit-text-stroke:.3px #444;">Формирование предложения</span>
<span style="left:1056.11px;top:455.00px;font-size:13.20px;line-height:18px;color:#444;transform:scale(0.2558,0.3333);transform-origin:100% 50%;-webkit-text-stroke:.3px #444;">Квалификация клиента</span>
<span style="left:1080.29px;top:480.80px;font-size:13.20px;line-height:18px;color:#444;transform:scale(0.2523,0.3333);transform-origin:100% 50%;-webkit-text-stroke:.3px #444;">Первичный контакт</span>
<div style="left:1331.20px;top:347.40px;width:4.20px;height:5.00px;background:#d02935;"></div>
<span style="left:1336.00px;top:341.00px;font-size:13.20px;line-height:18px;color:#444;transform:scale(0.2477,0.3333);transform-origin:0 50%;-webkit-text-stroke:.3px #444;">Выиграна</span>
<div style="left:1331.20px;top:412.90px;width:4.20px;height:5.00px;background:#ffe100;"></div>
<span style="left:1336.00px;top:406.50px;font-size:13.20px;line-height:18px;color:#444;transform:scale(0.2475,0.3333);transform-origin:0 50%;-webkit-text-stroke:.3px #444;">В работе</span>
<div style="left:1331.20px;top:478.60px;width:4.20px;height:5.00px;background:#1dcc21;"></div>
<span style="left:1336.00px;top:472.20px;font-size:13.20px;line-height:18px;color:#444;transform:scale(0.2469,0.3333);transform-origin:0 50%;-webkit-text-stroke:.3px #444;">Проиграна</span>
<span style="left:1136.80px;top:520.40px;font-size:8.00px;line-height:12px;color:#111;font-weight:bold;transform:scaleX(0.7942);transform-origin:0 50%;">Потенциальная сумма продажи</span>
<svg style="left:1127.40px;top:540.00px;overflow:hidden;" width="305.79999999999995" height="92.20000000000005" viewBox="1127.4 540 305.79999999999995 92.20000000000005"><path d="M1203.00 544.10 V640.00" stroke="#cfcfcf" stroke-width="0.7" fill="none"/><path d="M1223.30 544.10 V640.00" stroke="#cfcfcf" stroke-width="0.7" fill="none"/><path d="M1243.60 544.10 V640.00" stroke="#cfcfcf" stroke-width="0.7" fill="none"/><path d="M1263.90 544.10 V640.00" stroke="#cfcfcf" stroke-width="0.7" fill="none"/><path d="M1284.20 544.10 V640.00" stroke="#cfcfcf" stroke-width="0.7" fill="none"/><path d="M1304.50 544.10 V640.00" stroke="#cfcfcf" stroke-width="0.7" fill="none"/><path d="M1324.80 544.10 V640.00" stroke="#cfcfcf" stroke-width="0.7" fill="none"/><path d="M1203.00 544.10 H1324.80" stroke="#cfcfcf" stroke-width="0.7" fill="none"/><path d="M1203.00 544.10 L1200.20 547.80 V640.00" stroke="#cfcfcf" stroke-width="0.7" fill="none"/><path d="M1200.20 553.20 l2.80 -3.70 h71.25 l-2.80 3.70 Z" fill="#ff6874"/><rect x="1200.20" y="553.20" width="71.25" height="16.80" fill="#d02935"/><path d="M1271.45 553.20 l2.80 -3.70 v16.80 l-2.80 3.70 Z" fill="#008f00"/><path d="M1200.20 579.20 l2.80 -3.70 h35.52 l-2.80 3.70 Z" fill="#ff6874"/><rect x="1200.20" y="579.20" width="35.52" height="16.80" fill="#d02935"/><path d="M1235.73 579.20 l2.80 -3.70 v16.80 l-2.80 3.70 Z" fill="#008f00"/><path d="M1200.20 604.90 l2.80 -3.70 h35.52 l-2.80 3.70 Z" fill="#ff6874"/><rect x="1200.20" y="604.90" width="35.52" height="16.80" fill="#d02935"/><path d="M1235.73 604.90 l2.80 -3.70 v16.80 l-2.80 3.70 Z" fill="#008f00"/><path d="M1200.20 630.50 l2.80 -3.70 h35.52 l-2.80 3.70 Z" fill="#ff6874"/><rect x="1200.20" y="630.50" width="35.52" height="16.80" fill="#d02935"/><path d="M1235.73 630.50 l2.80 -3.70 v16.80 l-2.80 3.70 Z" fill="#008f00"/></svg>
<span style="left:1036.75px;top:553.60px;font-size:13.20px;line-height:18px;color:#444;transform:scale(0.2564,0.3333);transform-origin:100% 50%;-webkit-text-stroke:.3px #444;">Выполнение обязательств</span>
<span style="left:953.48px;top:579.45px;font-size:13.20px;line-height:18px;color:#444;transform:scale(0.2542,0.3333);transform-origin:100% 50%;-webkit-text-stroke:.3px #444;">Подготовка к выполнению обязательств</span>
<span style="left:1058.72px;top:605.30px;font-size:13.20px;line-height:18px;color:#444;transform:scale(0.2538,0.3333);transform-origin:100% 50%;-webkit-text-stroke:.3px #444;">Согласование условий</span>
<div style="left:1331.20px;top:574.20px;width:4.20px;height:5.20px;background:#d02935;"></div>
<span style="left:1336.00px;top:567.80px;font-size:13.20px;line-height:18px;color:#444;transform:scale(0.2477,0.3333);transform-origin:0 50%;-webkit-text-stroke:.3px #444;">Выиграна</span>
</div>
</body></html>
